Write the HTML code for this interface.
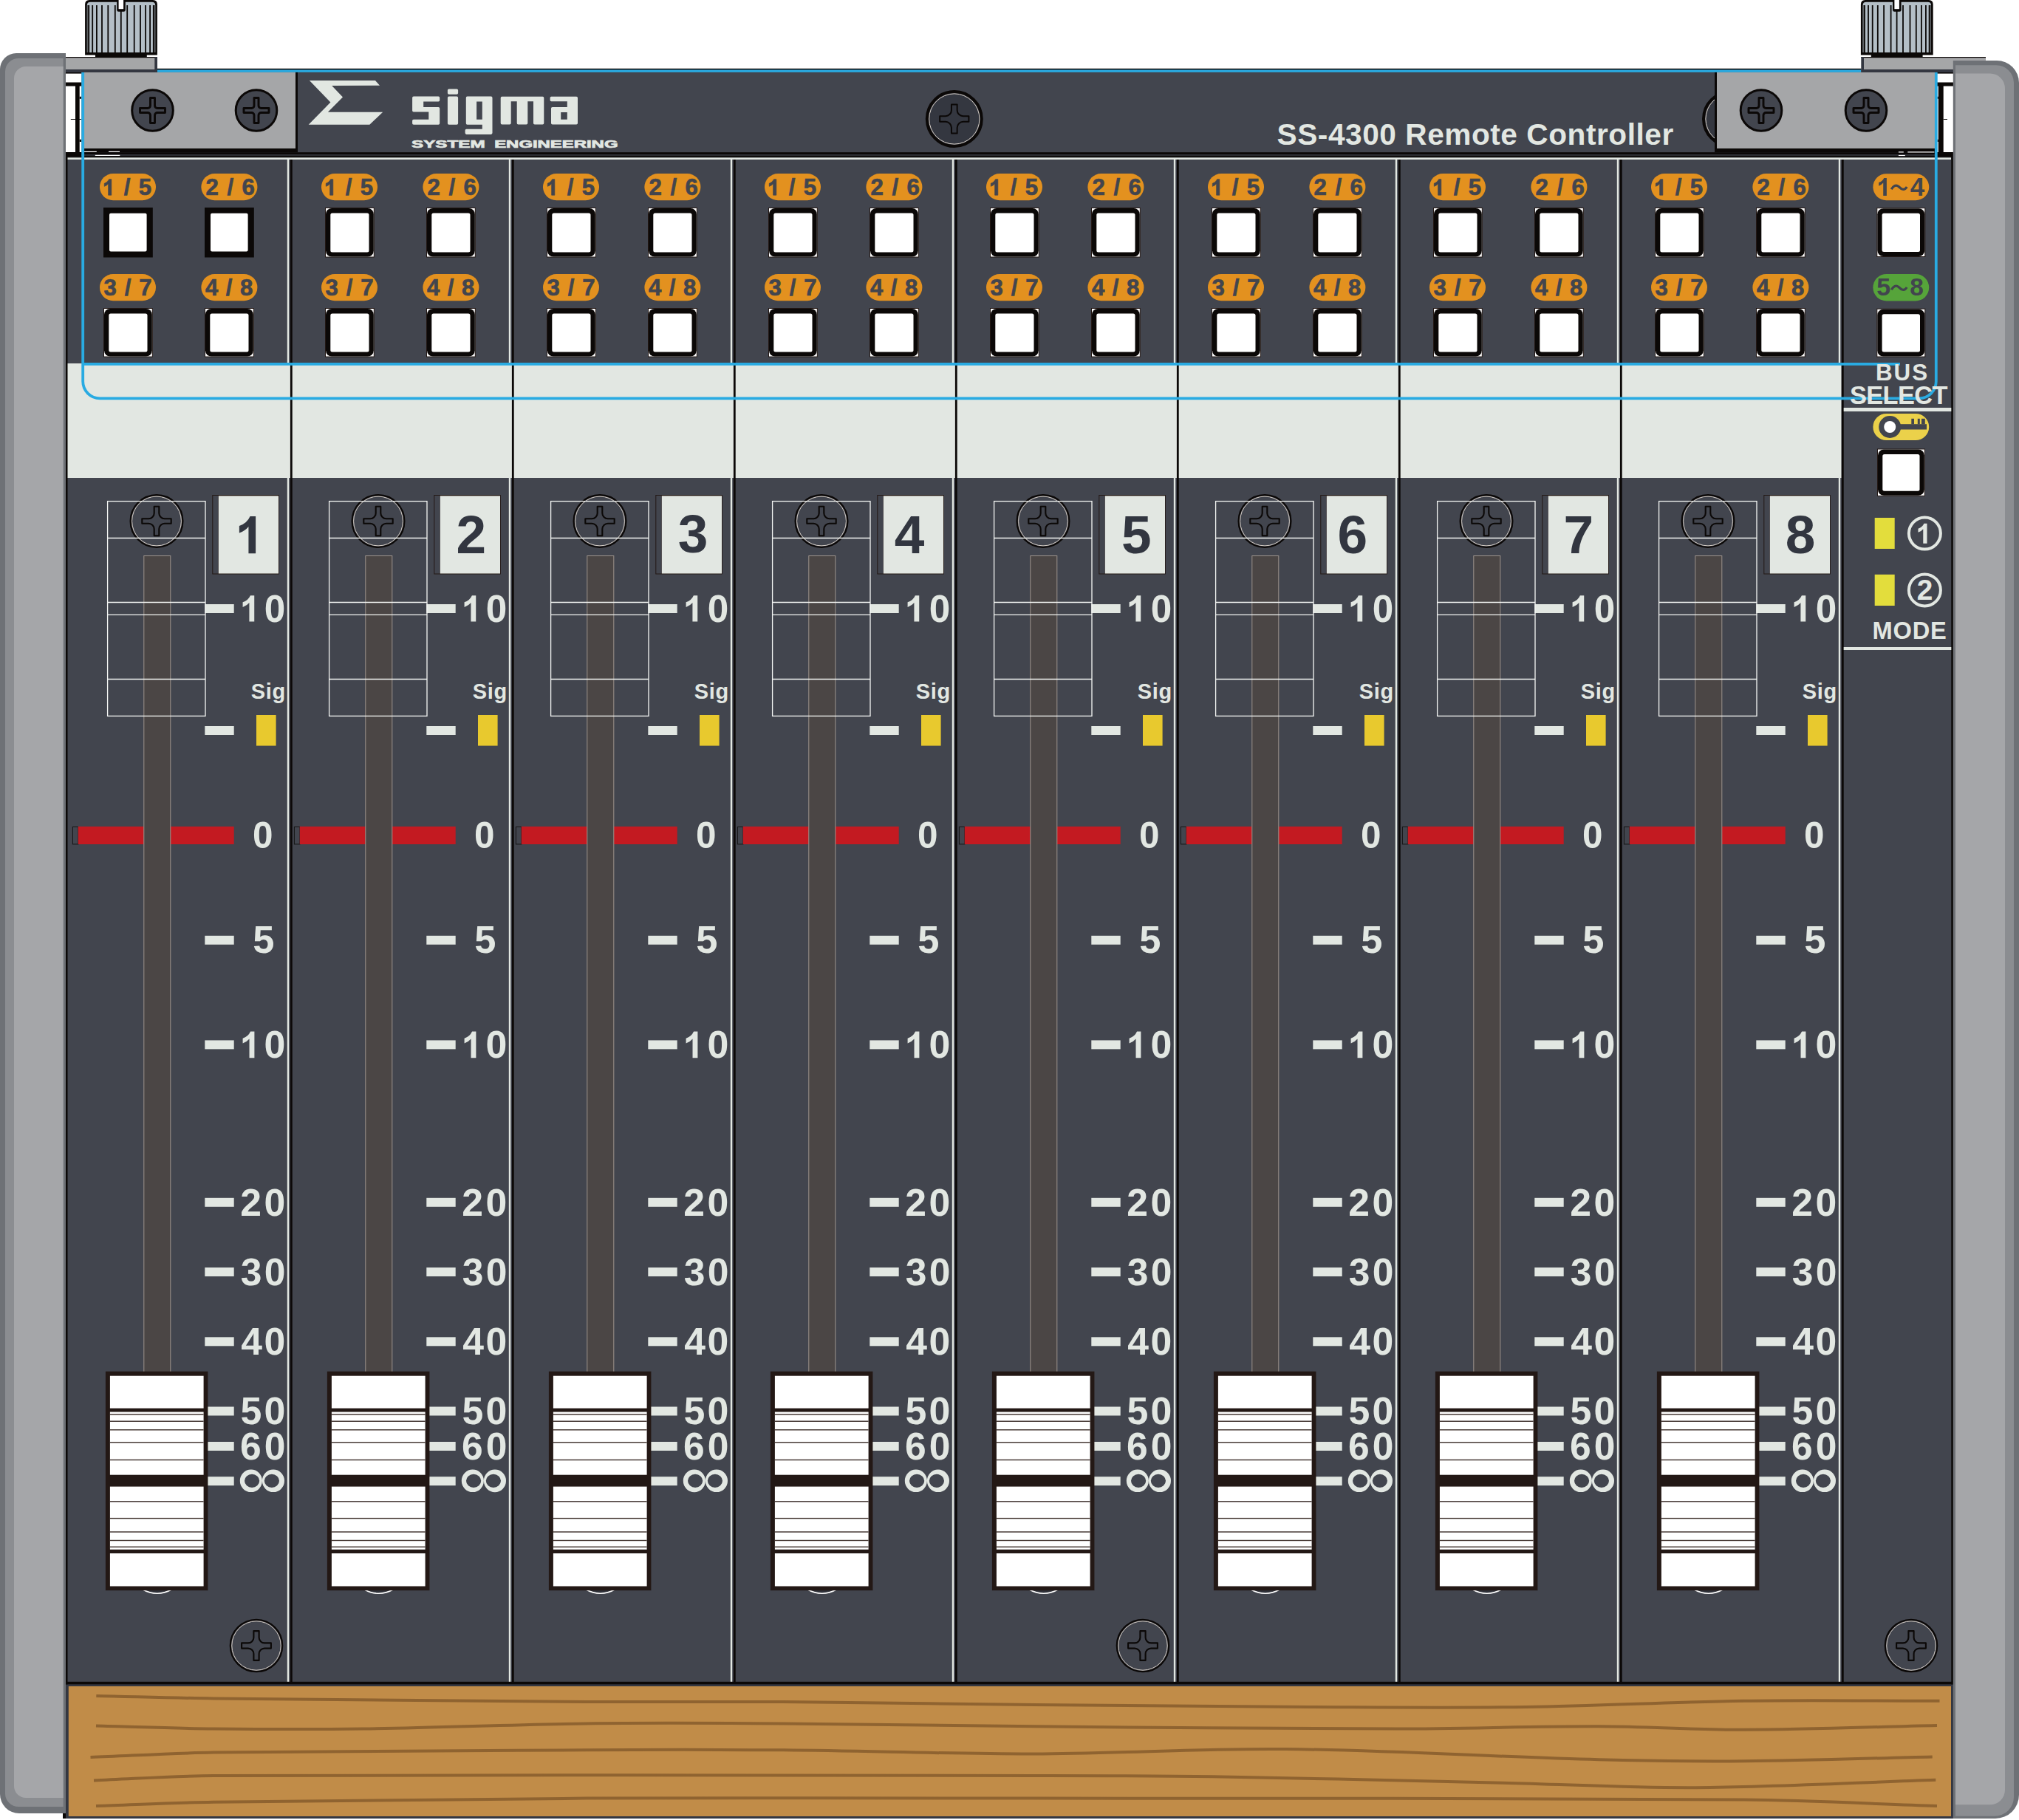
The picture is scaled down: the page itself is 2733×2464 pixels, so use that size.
<!DOCTYPE html>
<html><head><meta charset="utf-8"><title>SS-4300 Remote Controller</title>
<style>html,body{margin:0;padding:0;background:#fff;}body{width:2733px;height:2464px;overflow:hidden;}svg{display:block;font-family:"Liberation Sans",sans-serif;}</style>
</head><body>
<svg width="2733" height="2464" viewBox="0 0 2733 2464" font-family="Liberation Sans, sans-serif">
<rect x="0.00" y="0.00" width="2733.00" height="2464.00" fill="#ffffff"/>
<rect x="89.00" y="93.00" width="2555.00" height="2188.00" fill="#42454e"/>
<rect x="89.00" y="92.80" width="2555.00" height="1.80" fill="#0b0807"/>
<rect x="89.00" y="97.60" width="21.50" height="114.90" fill="#ffffff"/>
<rect x="89.00" y="97.70" width="21.50" height="1.90" fill="#0b0807"/>
<rect x="89.00" y="111.50" width="21.50" height="5.10" fill="#0b0807"/>
<rect x="89.00" y="206.00" width="21.50" height="6.50" fill="#0b0807"/>
<rect x="102.00" y="116.00" width="5.70" height="90.00" fill="#0b0807"/>
<rect x="107.70" y="130.80" width="2.30" height="3.00" fill="#0b0807"/>
<rect x="107.70" y="188.80" width="2.30" height="3.20" fill="#0b0807"/>
<rect x="95.80" y="161.00" width="14.20" height="1.00" fill="#0b0807"/>
<rect x="2622.00" y="97.60" width="22.00" height="114.90" fill="#ffffff"/>
<rect x="2622.00" y="97.70" width="22.00" height="1.90" fill="#0b0807"/>
<rect x="2622.00" y="111.50" width="22.00" height="5.10" fill="#0b0807"/>
<rect x="2622.00" y="206.00" width="22.00" height="6.50" fill="#0b0807"/>
<rect x="2623.80" y="116.00" width="6.90" height="90.00" fill="#0b0807"/>
<rect x="2622.50" y="130.80" width="1.30" height="3.00" fill="#0b0807"/>
<rect x="2622.50" y="188.80" width="1.30" height="3.20" fill="#0b0807"/>
<rect x="2630.70" y="161.00" width="5.30" height="1.00" fill="#0b0807"/>
<rect x="89.00" y="206.20" width="2555.00" height="3.10" fill="#0b0807"/>
<rect x="89.00" y="210.60" width="2555.00" height="2.20" fill="#0b0807"/>
<rect x="89.00" y="212.80" width="2555.00" height="0.60" fill="#1c1c1c"/>
<rect x="91.00" y="213.40" width="2550.00" height="2.60" fill="#e2e7e2"/>
<rect x="91.00" y="492.00" width="2401.50" height="155.00" fill="#e2e7e2"/>
<rect x="88.80" y="212.00" width="2.70" height="2069.00" fill="#0b0807"/>
<rect x="2641.30" y="212.00" width="2.90" height="2069.00" fill="#0b0807"/>
<rect x="388.80" y="216.00" width="2.40" height="276.00" fill="#e2e7e2"/>
<rect x="388.80" y="647.00" width="2.40" height="1630.00" fill="#e2e7e2"/>
<rect x="392.90" y="216.00" width="2.80" height="2061.00" fill="#0b0807"/>
<rect x="135.00" y="235.00" width="76.00" height="36.20" rx="18.10" fill="#e3911f"/>
<rect x="272.40" y="235.00" width="76.00" height="36.20" rx="18.10" fill="#e3911f"/>
<rect x="135.00" y="371.00" width="76.00" height="36.20" rx="18.10" fill="#e3911f"/>
<rect x="272.40" y="371.00" width="76.00" height="36.20" rx="18.10" fill="#e3911f"/>
<text x="167.64 187.74" y="264.18" font-size="31.16" fill="#42454e" font-weight="bold" stroke="#42454e" stroke-width="0.7">/5</text><path d="M147.56,242.74 L150.80,242.74 L150.80,264.18 L146.66,264.18 L146.66,248.70 Q144.73,251.10 141.30,252.32 L141.30,248.27 Q145.80,246.81 147.56,242.74 Z" fill="#42454e" stroke="#42454e" stroke-width="0.7"/>
<text x="278.52 307.39 327.60" y="264.18" font-size="31.16" fill="#42454e" font-weight="bold" stroke="#42454e" stroke-width="0.7">2/6</text>
<text x="140.58 168.75 188.24" y="400.18" font-size="31.16" fill="#42454e" font-weight="bold" stroke="#42454e" stroke-width="0.7">3/7</text>
<text x="277.93 305.82 325.03" y="400.18" font-size="31.16" fill="#42454e" font-weight="bold" stroke="#42454e" stroke-width="0.7">4/8</text>
<rect x="140.00" y="281.00" width="66.80" height="67.50" fill="#0b0807"/>
<rect x="148.00" y="288.80" width="50.60" height="51.70" rx="2" fill="#ffffff"/>
<rect x="277.00" y="281.00" width="66.80" height="67.50" fill="#0b0807"/>
<rect x="285.00" y="288.80" width="50.60" height="51.70" rx="2" fill="#ffffff"/>
<rect x="140.50" y="417.50" width="65.80" height="65.50" fill="#ffffff" stroke="#231815" stroke-width="1"/>
<rect x="141.00" y="418.00" width="64.80" height="64.50" rx="8" fill="#0b0807"/>
<rect x="147.30" y="424.60" width="52.20" height="51.90" rx="2.5" fill="#ffffff"/>
<rect x="277.50" y="417.50" width="65.80" height="65.50" fill="#ffffff" stroke="#231815" stroke-width="1"/>
<rect x="278.00" y="418.00" width="64.80" height="64.50" rx="8" fill="#0b0807"/>
<rect x="284.30" y="424.60" width="52.20" height="51.90" rx="2.5" fill="#ffffff"/>
<circle cx="212.00" cy="705.50" r="35.40" fill="#42454e" stroke="#0b0807" stroke-width="2.20"/>
<circle cx="212.00" cy="705.50" r="33.40" fill="none" stroke="#d8d0c8" stroke-width="1"/>
<path d="M208.70,685.80 L215.30,685.80 L215.30,694.70 C215.30,698.83 218.68,702.20 222.80,702.20 L231.70,702.20 L231.70,708.80 L222.80,708.80 C218.68,708.80 215.30,712.17 215.30,716.30 L215.30,725.20 L208.70,725.20 L208.70,716.30 C208.70,712.17 205.32,708.80 201.20,708.80 L192.30,708.80 L192.30,702.20 L201.20,702.20 C205.32,702.20 208.70,698.83 208.70,694.70 Z" fill="#42454e" stroke="#0b0807" stroke-width="2.10" stroke-linejoin="round"/>
<rect x="287.30" y="670.00" width="90.50" height="107.50" fill="#231815"/>
<rect x="288.30" y="671.00" width="7.20" height="105.50" fill="#42454e"/>
<rect x="295.80" y="671.30" width="81.20" height="105.20" fill="#e2e7e2"/>
<path d="M338.54,699.08 L346.12,699.08 L346.12,749.30 L336.43,749.30 L336.43,713.04 Q331.91,718.66 323.88,721.53 L323.88,712.03 Q334.42,708.62 338.54,699.08 Z" fill="#323640"/>
<rect x="277.30" y="818.00" width="39.40" height="12.00" fill="#e2e7e2"/>
<rect x="277.30" y="983.00" width="39.40" height="12.00" fill="#e2e7e2"/>
<rect x="277.30" y="1266.80" width="39.40" height="12.00" fill="#e2e7e2"/>
<rect x="277.30" y="1408.40" width="39.40" height="12.00" fill="#e2e7e2"/>
<rect x="277.30" y="1621.80" width="39.40" height="12.00" fill="#e2e7e2"/>
<rect x="277.30" y="1716.00" width="39.40" height="12.00" fill="#e2e7e2"/>
<rect x="277.30" y="1810.30" width="39.40" height="12.00" fill="#e2e7e2"/>
<rect x="277.30" y="1904.50" width="39.40" height="12.00" fill="#e2e7e2"/>
<rect x="277.30" y="1952.00" width="39.40" height="12.00" fill="#e2e7e2"/>
<rect x="277.30" y="1999.20" width="39.40" height="12.00" fill="#e2e7e2"/>
<text x="357.79" y="841.50" font-size="51.27" fill="#e2e7e2" font-weight="bold">0</text><path d="M338.90,806.23 L344.23,806.23 L344.23,841.50 L337.42,841.50 L337.42,816.03 Q334.24,819.98 328.60,821.99 L328.60,815.33 Q336.01,812.93 338.90,806.23 Z" fill="#e2e7e2"/>
<text x="339.86 359.79 368.43" y="945.85" font-size="29.00" fill="#e2e7e2" font-weight="bold">Sig</text>
<text x="341.94" y="1147.52" font-size="49.43" fill="#e2e7e2" font-weight="bold">0</text>
<text x="342.19" y="1289.89" font-size="52.45" fill="#e2e7e2" font-weight="bold">5</text>
<text x="357.50" y="1432.19" font-size="51.84" fill="#e2e7e2" font-weight="bold">0</text><path d="M339.01,1396.53 L344.40,1396.53 L344.40,1432.19 L337.52,1432.19 L337.52,1406.45 Q334.31,1410.44 328.60,1412.47 L328.60,1405.73 Q336.09,1403.31 339.01,1396.53 Z" fill="#e2e7e2"/>
<text x="325.21 357.57" y="1645.70" font-size="51.69" fill="#e2e7e2" font-weight="bold">20</text>
<text x="325.82 357.63" y="1739.82" font-size="51.59" fill="#e2e7e2" font-weight="bold">30</text>
<text x="326.22 357.57" y="1834.10" font-size="51.69" fill="#e2e7e2" font-weight="bold">40</text>
<text x="325.41 357.50" y="1927.99" font-size="51.84" fill="#e2e7e2" font-weight="bold">50</text>
<text x="325.11 357.64" y="1976.00" font-size="51.55" fill="#e2e7e2" font-weight="bold">60</text>
<path d="M324.80,2004.85 a15.05,15.25 0 1 0 30.10,0 a15.05,15.25 0 1 0 -30.10,0 Z M354.90,2004.85 a15.05,15.25 0 1 0 30.10,0 a15.05,15.25 0 1 0 -30.10,0 Z M331.00,2004.85 a10.10,9.05 0 1 0 20.20,0 a10.10,9.05 0 1 0 -20.20,0 Z M357.80,2004.85 a10.10,9.05 0 1 0 20.20,0 a10.10,9.05 0 1 0 -20.20,0 Z" fill="#e2e7e2" fill-rule="evenodd"/>
<rect x="347.00" y="968.00" width="26.60" height="41.60" fill="#e8c92e"/>
<rect x="98.40" y="1119.5" width="7.6" height="23.4" fill="#42454e" stroke="#151515" stroke-width="1"/>
<rect x="105.80" y="1119.00" width="210.90" height="24.00" fill="#c31a21"/>
<rect x="194.80" y="752.5" width="36" height="1106" fill="#4b4645" stroke="#9d938c" stroke-width="1"/>
<g fill="none" stroke="#f4f6f4" stroke-width="1.3">
<rect x="145.60" y="678.6" width="132.4" height="290.8"/>
<line x1="145.60" y1="728.50" x2="278.00" y2="728.50"/>
<line x1="145.60" y1="815.50" x2="278.00" y2="815.50"/>
<line x1="145.60" y1="832.30" x2="278.00" y2="832.30"/>
<line x1="145.60" y1="919.50" x2="278.00" y2="919.50"/>
</g>
<path d="M193.50,2152 A38,38 0 0 0 232.00,2152 Z" fill="#2f3139" stroke="#ffffff" stroke-width="1.6"/>
<rect x="142.90" y="1856.70" width="138.50" height="296.50" fill="#231815"/>
<rect x="148.90" y="1862.70" width="126.70" height="43.90" fill="#ffffff"/>
<rect x="148.90" y="1911.50" width="126.70" height="85.20" fill="#ffffff"/>
<rect x="148.90" y="2012.60" width="126.70" height="85.20" fill="#ffffff"/>
<rect x="148.90" y="2103.00" width="126.70" height="44.50" fill="#ffffff"/>
<rect x="148.90" y="1914.30" width="126.70" height="1.40" fill="#3b2d28"/>
<rect x="148.90" y="1923.50" width="126.70" height="1.40" fill="#3b2d28"/>
<rect x="148.90" y="1935.10" width="126.70" height="1.40" fill="#3b2d28"/>
<rect x="148.90" y="1952.10" width="126.70" height="1.40" fill="#3b2d28"/>
<rect x="148.90" y="1975.80" width="126.70" height="1.40" fill="#3b2d28"/>
<rect x="148.90" y="2032.10" width="126.70" height="1.40" fill="#3b2d28"/>
<rect x="148.90" y="2054.90" width="126.70" height="1.40" fill="#3b2d28"/>
<rect x="148.90" y="2073.30" width="126.70" height="1.40" fill="#3b2d28"/>
<rect x="148.90" y="2084.80" width="126.70" height="1.40" fill="#3b2d28"/>
<rect x="148.90" y="2093.60" width="126.70" height="1.40" fill="#3b2d28"/>
<circle cx="347.00" cy="2228.00" r="35.20" fill="#42454e" stroke="#0b0807" stroke-width="2.20"/>
<circle cx="347.00" cy="2228.00" r="33.20" fill="none" stroke="#d8d0c8" stroke-width="1"/>
<path d="M343.40,2208.10 L350.60,2208.10 L350.60,2216.90 C350.60,2221.03 353.98,2224.40 358.10,2224.40 L366.90,2224.40 L366.90,2231.60 L358.10,2231.60 C353.98,2231.60 350.60,2234.97 350.60,2239.10 L350.60,2247.90 L343.40,2247.90 L343.40,2239.10 C343.40,2234.97 340.02,2231.60 335.90,2231.60 L327.10,2231.60 L327.10,2224.40 L335.90,2224.40 C340.02,2224.40 343.40,2221.03 343.40,2216.90 Z" fill="#42454e" stroke="#0b0807" stroke-width="2.10" stroke-linejoin="round"/>
<rect x="688.80" y="216.00" width="2.40" height="276.00" fill="#e2e7e2"/>
<rect x="688.80" y="647.00" width="2.40" height="1630.00" fill="#e2e7e2"/>
<rect x="692.90" y="216.00" width="2.80" height="2061.00" fill="#0b0807"/>
<rect x="435.00" y="235.00" width="76.00" height="36.20" rx="18.10" fill="#e3911f"/>
<rect x="572.40" y="235.00" width="76.00" height="36.20" rx="18.10" fill="#e3911f"/>
<rect x="435.00" y="371.00" width="76.00" height="36.20" rx="18.10" fill="#e3911f"/>
<rect x="572.40" y="371.00" width="76.00" height="36.20" rx="18.10" fill="#e3911f"/>
<text x="467.64 487.74" y="264.18" font-size="31.16" fill="#42454e" font-weight="bold" stroke="#42454e" stroke-width="0.7">/5</text><path d="M447.56,242.74 L450.80,242.74 L450.80,264.18 L446.66,264.18 L446.66,248.70 Q444.73,251.10 441.30,252.32 L441.30,248.27 Q445.80,246.81 447.56,242.74 Z" fill="#42454e" stroke="#42454e" stroke-width="0.7"/>
<text x="578.52 607.39 627.60" y="264.18" font-size="31.16" fill="#42454e" font-weight="bold" stroke="#42454e" stroke-width="0.7">2/6</text>
<text x="440.58 468.75 488.24" y="400.18" font-size="31.16" fill="#42454e" font-weight="bold" stroke="#42454e" stroke-width="0.7">3/7</text>
<text x="577.93 605.82 625.03" y="400.18" font-size="31.16" fill="#42454e" font-weight="bold" stroke="#42454e" stroke-width="0.7">4/8</text>
<rect x="440.50" y="281.50" width="65.80" height="66.50" fill="#ffffff" stroke="#231815" stroke-width="1"/>
<rect x="441.00" y="282.00" width="64.80" height="65.50" rx="8" fill="#0b0807"/>
<rect x="447.30" y="288.60" width="52.20" height="52.90" rx="2.5" fill="#ffffff"/>
<rect x="577.50" y="281.50" width="65.80" height="66.50" fill="#ffffff" stroke="#231815" stroke-width="1"/>
<rect x="578.00" y="282.00" width="64.80" height="65.50" rx="8" fill="#0b0807"/>
<rect x="584.30" y="288.60" width="52.20" height="52.90" rx="2.5" fill="#ffffff"/>
<rect x="440.50" y="417.50" width="65.80" height="65.50" fill="#ffffff" stroke="#231815" stroke-width="1"/>
<rect x="441.00" y="418.00" width="64.80" height="64.50" rx="8" fill="#0b0807"/>
<rect x="447.30" y="424.60" width="52.20" height="51.90" rx="2.5" fill="#ffffff"/>
<rect x="577.50" y="417.50" width="65.80" height="65.50" fill="#ffffff" stroke="#231815" stroke-width="1"/>
<rect x="578.00" y="418.00" width="64.80" height="64.50" rx="8" fill="#0b0807"/>
<rect x="584.30" y="424.60" width="52.20" height="51.90" rx="2.5" fill="#ffffff"/>
<circle cx="512.00" cy="705.50" r="35.40" fill="#42454e" stroke="#0b0807" stroke-width="2.20"/>
<circle cx="512.00" cy="705.50" r="33.40" fill="none" stroke="#d8d0c8" stroke-width="1"/>
<path d="M508.70,685.80 L515.30,685.80 L515.30,694.70 C515.30,698.83 518.67,702.20 522.80,702.20 L531.70,702.20 L531.70,708.80 L522.80,708.80 C518.67,708.80 515.30,712.17 515.30,716.30 L515.30,725.20 L508.70,725.20 L508.70,716.30 C508.70,712.17 505.32,708.80 501.20,708.80 L492.30,708.80 L492.30,702.20 L501.20,702.20 C505.32,702.20 508.70,698.83 508.70,694.70 Z" fill="#42454e" stroke="#0b0807" stroke-width="2.10" stroke-linejoin="round"/>
<rect x="587.30" y="670.00" width="90.50" height="107.50" fill="#231815"/>
<rect x="588.30" y="671.00" width="7.20" height="105.50" fill="#42454e"/>
<rect x="595.80" y="671.30" width="81.20" height="105.20" fill="#e2e7e2"/>
<text x="617.40" y="749.30" font-size="73.00" fill="#323640" font-weight="bold">2</text>
<rect x="577.30" y="818.00" width="39.40" height="12.00" fill="#e2e7e2"/>
<rect x="577.30" y="983.00" width="39.40" height="12.00" fill="#e2e7e2"/>
<rect x="577.30" y="1266.80" width="39.40" height="12.00" fill="#e2e7e2"/>
<rect x="577.30" y="1408.40" width="39.40" height="12.00" fill="#e2e7e2"/>
<rect x="577.30" y="1621.80" width="39.40" height="12.00" fill="#e2e7e2"/>
<rect x="577.30" y="1716.00" width="39.40" height="12.00" fill="#e2e7e2"/>
<rect x="577.30" y="1810.30" width="39.40" height="12.00" fill="#e2e7e2"/>
<rect x="577.30" y="1904.50" width="39.40" height="12.00" fill="#e2e7e2"/>
<rect x="577.30" y="1952.00" width="39.40" height="12.00" fill="#e2e7e2"/>
<rect x="577.30" y="1999.20" width="39.40" height="12.00" fill="#e2e7e2"/>
<text x="657.79" y="841.50" font-size="51.27" fill="#e2e7e2" font-weight="bold">0</text><path d="M638.90,806.23 L644.23,806.23 L644.23,841.50 L637.42,841.50 L637.42,816.03 Q634.24,819.98 628.60,821.99 L628.60,815.33 Q636.01,812.93 638.90,806.23 Z" fill="#e2e7e2"/>
<text x="639.86 659.79 668.43" y="945.85" font-size="29.00" fill="#e2e7e2" font-weight="bold">Sig</text>
<text x="641.94" y="1147.52" font-size="49.43" fill="#e2e7e2" font-weight="bold">0</text>
<text x="642.19" y="1289.89" font-size="52.45" fill="#e2e7e2" font-weight="bold">5</text>
<text x="657.50" y="1432.19" font-size="51.84" fill="#e2e7e2" font-weight="bold">0</text><path d="M639.01,1396.53 L644.40,1396.53 L644.40,1432.19 L637.52,1432.19 L637.52,1406.45 Q634.31,1410.44 628.60,1412.47 L628.60,1405.73 Q636.09,1403.31 639.01,1396.53 Z" fill="#e2e7e2"/>
<text x="625.21 657.57" y="1645.70" font-size="51.69" fill="#e2e7e2" font-weight="bold">20</text>
<text x="625.82 657.63" y="1739.82" font-size="51.59" fill="#e2e7e2" font-weight="bold">30</text>
<text x="626.22 657.57" y="1834.10" font-size="51.69" fill="#e2e7e2" font-weight="bold">40</text>
<text x="625.41 657.50" y="1927.99" font-size="51.84" fill="#e2e7e2" font-weight="bold">50</text>
<text x="625.11 657.64" y="1976.00" font-size="51.55" fill="#e2e7e2" font-weight="bold">60</text>
<path d="M624.80,2004.85 a15.05,15.25 0 1 0 30.10,0 a15.05,15.25 0 1 0 -30.10,0 Z M654.90,2004.85 a15.05,15.25 0 1 0 30.10,0 a15.05,15.25 0 1 0 -30.10,0 Z M631.00,2004.85 a10.10,9.05 0 1 0 20.20,0 a10.10,9.05 0 1 0 -20.20,0 Z M657.80,2004.85 a10.10,9.05 0 1 0 20.20,0 a10.10,9.05 0 1 0 -20.20,0 Z" fill="#e2e7e2" fill-rule="evenodd"/>
<rect x="647.00" y="968.00" width="26.60" height="41.60" fill="#e8c92e"/>
<rect x="398.40" y="1119.5" width="7.6" height="23.4" fill="#42454e" stroke="#151515" stroke-width="1"/>
<rect x="405.80" y="1119.00" width="210.90" height="24.00" fill="#c31a21"/>
<rect x="494.80" y="752.5" width="36" height="1106" fill="#4b4645" stroke="#9d938c" stroke-width="1"/>
<g fill="none" stroke="#f4f6f4" stroke-width="1.3">
<rect x="445.60" y="678.6" width="132.4" height="290.8"/>
<line x1="445.60" y1="728.50" x2="578.00" y2="728.50"/>
<line x1="445.60" y1="815.50" x2="578.00" y2="815.50"/>
<line x1="445.60" y1="832.30" x2="578.00" y2="832.30"/>
<line x1="445.60" y1="919.50" x2="578.00" y2="919.50"/>
</g>
<path d="M493.50,2152 A38,38 0 0 0 532.00,2152 Z" fill="#2f3139" stroke="#ffffff" stroke-width="1.6"/>
<rect x="442.90" y="1856.70" width="138.50" height="296.50" fill="#231815"/>
<rect x="448.90" y="1862.70" width="126.70" height="43.90" fill="#ffffff"/>
<rect x="448.90" y="1911.50" width="126.70" height="85.20" fill="#ffffff"/>
<rect x="448.90" y="2012.60" width="126.70" height="85.20" fill="#ffffff"/>
<rect x="448.90" y="2103.00" width="126.70" height="44.50" fill="#ffffff"/>
<rect x="448.90" y="1914.30" width="126.70" height="1.40" fill="#3b2d28"/>
<rect x="448.90" y="1923.50" width="126.70" height="1.40" fill="#3b2d28"/>
<rect x="448.90" y="1935.10" width="126.70" height="1.40" fill="#3b2d28"/>
<rect x="448.90" y="1952.10" width="126.70" height="1.40" fill="#3b2d28"/>
<rect x="448.90" y="1975.80" width="126.70" height="1.40" fill="#3b2d28"/>
<rect x="448.90" y="2032.10" width="126.70" height="1.40" fill="#3b2d28"/>
<rect x="448.90" y="2054.90" width="126.70" height="1.40" fill="#3b2d28"/>
<rect x="448.90" y="2073.30" width="126.70" height="1.40" fill="#3b2d28"/>
<rect x="448.90" y="2084.80" width="126.70" height="1.40" fill="#3b2d28"/>
<rect x="448.90" y="2093.60" width="126.70" height="1.40" fill="#3b2d28"/>
<rect x="988.80" y="216.00" width="2.40" height="276.00" fill="#e2e7e2"/>
<rect x="988.80" y="647.00" width="2.40" height="1630.00" fill="#e2e7e2"/>
<rect x="992.90" y="216.00" width="2.80" height="2061.00" fill="#0b0807"/>
<rect x="735.00" y="235.00" width="76.00" height="36.20" rx="18.10" fill="#e3911f"/>
<rect x="872.40" y="235.00" width="76.00" height="36.20" rx="18.10" fill="#e3911f"/>
<rect x="735.00" y="371.00" width="76.00" height="36.20" rx="18.10" fill="#e3911f"/>
<rect x="872.40" y="371.00" width="76.00" height="36.20" rx="18.10" fill="#e3911f"/>
<text x="767.64 787.74" y="264.18" font-size="31.16" fill="#42454e" font-weight="bold" stroke="#42454e" stroke-width="0.7">/5</text><path d="M747.56,242.74 L750.80,242.74 L750.80,264.18 L746.66,264.18 L746.66,248.70 Q744.73,251.10 741.30,252.32 L741.30,248.27 Q745.80,246.81 747.56,242.74 Z" fill="#42454e" stroke="#42454e" stroke-width="0.7"/>
<text x="878.52 907.39 927.60" y="264.18" font-size="31.16" fill="#42454e" font-weight="bold" stroke="#42454e" stroke-width="0.7">2/6</text>
<text x="740.58 768.75 788.24" y="400.18" font-size="31.16" fill="#42454e" font-weight="bold" stroke="#42454e" stroke-width="0.7">3/7</text>
<text x="877.93 905.82 925.03" y="400.18" font-size="31.16" fill="#42454e" font-weight="bold" stroke="#42454e" stroke-width="0.7">4/8</text>
<rect x="740.50" y="281.50" width="65.80" height="66.50" fill="#ffffff" stroke="#231815" stroke-width="1"/>
<rect x="741.00" y="282.00" width="64.80" height="65.50" rx="8" fill="#0b0807"/>
<rect x="747.30" y="288.60" width="52.20" height="52.90" rx="2.5" fill="#ffffff"/>
<rect x="877.50" y="281.50" width="65.80" height="66.50" fill="#ffffff" stroke="#231815" stroke-width="1"/>
<rect x="878.00" y="282.00" width="64.80" height="65.50" rx="8" fill="#0b0807"/>
<rect x="884.30" y="288.60" width="52.20" height="52.90" rx="2.5" fill="#ffffff"/>
<rect x="740.50" y="417.50" width="65.80" height="65.50" fill="#ffffff" stroke="#231815" stroke-width="1"/>
<rect x="741.00" y="418.00" width="64.80" height="64.50" rx="8" fill="#0b0807"/>
<rect x="747.30" y="424.60" width="52.20" height="51.90" rx="2.5" fill="#ffffff"/>
<rect x="877.50" y="417.50" width="65.80" height="65.50" fill="#ffffff" stroke="#231815" stroke-width="1"/>
<rect x="878.00" y="418.00" width="64.80" height="64.50" rx="8" fill="#0b0807"/>
<rect x="884.30" y="424.60" width="52.20" height="51.90" rx="2.5" fill="#ffffff"/>
<circle cx="812.00" cy="705.50" r="35.40" fill="#42454e" stroke="#0b0807" stroke-width="2.20"/>
<circle cx="812.00" cy="705.50" r="33.40" fill="none" stroke="#d8d0c8" stroke-width="1"/>
<path d="M808.70,685.80 L815.30,685.80 L815.30,694.70 C815.30,698.83 818.67,702.20 822.80,702.20 L831.70,702.20 L831.70,708.80 L822.80,708.80 C818.67,708.80 815.30,712.17 815.30,716.30 L815.30,725.20 L808.70,725.20 L808.70,716.30 C808.70,712.17 805.33,708.80 801.20,708.80 L792.30,708.80 L792.30,702.20 L801.20,702.20 C805.33,702.20 808.70,698.83 808.70,694.70 Z" fill="#42454e" stroke="#0b0807" stroke-width="2.10" stroke-linejoin="round"/>
<rect x="887.30" y="670.00" width="90.50" height="107.50" fill="#231815"/>
<rect x="888.30" y="671.00" width="7.20" height="105.50" fill="#42454e"/>
<rect x="895.80" y="671.30" width="81.20" height="105.20" fill="#e2e7e2"/>
<text x="917.78" y="748.48" font-size="73.00" fill="#323640" font-weight="bold">3</text>
<rect x="877.30" y="818.00" width="39.40" height="12.00" fill="#e2e7e2"/>
<rect x="877.30" y="983.00" width="39.40" height="12.00" fill="#e2e7e2"/>
<rect x="877.30" y="1266.80" width="39.40" height="12.00" fill="#e2e7e2"/>
<rect x="877.30" y="1408.40" width="39.40" height="12.00" fill="#e2e7e2"/>
<rect x="877.30" y="1621.80" width="39.40" height="12.00" fill="#e2e7e2"/>
<rect x="877.30" y="1716.00" width="39.40" height="12.00" fill="#e2e7e2"/>
<rect x="877.30" y="1810.30" width="39.40" height="12.00" fill="#e2e7e2"/>
<rect x="877.30" y="1904.50" width="39.40" height="12.00" fill="#e2e7e2"/>
<rect x="877.30" y="1952.00" width="39.40" height="12.00" fill="#e2e7e2"/>
<rect x="877.30" y="1999.20" width="39.40" height="12.00" fill="#e2e7e2"/>
<text x="957.79" y="841.50" font-size="51.27" fill="#e2e7e2" font-weight="bold">0</text><path d="M938.90,806.23 L944.23,806.23 L944.23,841.50 L937.42,841.50 L937.42,816.03 Q934.24,819.98 928.60,821.99 L928.60,815.33 Q936.01,812.93 938.90,806.23 Z" fill="#e2e7e2"/>
<text x="939.86 959.79 968.43" y="945.85" font-size="29.00" fill="#e2e7e2" font-weight="bold">Sig</text>
<text x="941.94" y="1147.52" font-size="49.43" fill="#e2e7e2" font-weight="bold">0</text>
<text x="942.19" y="1289.89" font-size="52.45" fill="#e2e7e2" font-weight="bold">5</text>
<text x="957.50" y="1432.19" font-size="51.84" fill="#e2e7e2" font-weight="bold">0</text><path d="M939.01,1396.53 L944.40,1396.53 L944.40,1432.19 L937.52,1432.19 L937.52,1406.45 Q934.31,1410.44 928.60,1412.47 L928.60,1405.73 Q936.09,1403.31 939.01,1396.53 Z" fill="#e2e7e2"/>
<text x="925.21 957.57" y="1645.70" font-size="51.69" fill="#e2e7e2" font-weight="bold">20</text>
<text x="925.82 957.63" y="1739.82" font-size="51.59" fill="#e2e7e2" font-weight="bold">30</text>
<text x="926.22 957.57" y="1834.10" font-size="51.69" fill="#e2e7e2" font-weight="bold">40</text>
<text x="925.41 957.50" y="1927.99" font-size="51.84" fill="#e2e7e2" font-weight="bold">50</text>
<text x="925.11 957.64" y="1976.00" font-size="51.55" fill="#e2e7e2" font-weight="bold">60</text>
<path d="M924.80,2004.85 a15.05,15.25 0 1 0 30.10,0 a15.05,15.25 0 1 0 -30.10,0 Z M954.90,2004.85 a15.05,15.25 0 1 0 30.10,0 a15.05,15.25 0 1 0 -30.10,0 Z M931.00,2004.85 a10.10,9.05 0 1 0 20.20,0 a10.10,9.05 0 1 0 -20.20,0 Z M957.80,2004.85 a10.10,9.05 0 1 0 20.20,0 a10.10,9.05 0 1 0 -20.20,0 Z" fill="#e2e7e2" fill-rule="evenodd"/>
<rect x="947.00" y="968.00" width="26.60" height="41.60" fill="#e8c92e"/>
<rect x="698.40" y="1119.5" width="7.6" height="23.4" fill="#42454e" stroke="#151515" stroke-width="1"/>
<rect x="705.80" y="1119.00" width="210.90" height="24.00" fill="#c31a21"/>
<rect x="794.80" y="752.5" width="36" height="1106" fill="#4b4645" stroke="#9d938c" stroke-width="1"/>
<g fill="none" stroke="#f4f6f4" stroke-width="1.3">
<rect x="745.60" y="678.6" width="132.4" height="290.8"/>
<line x1="745.60" y1="728.50" x2="878.00" y2="728.50"/>
<line x1="745.60" y1="815.50" x2="878.00" y2="815.50"/>
<line x1="745.60" y1="832.30" x2="878.00" y2="832.30"/>
<line x1="745.60" y1="919.50" x2="878.00" y2="919.50"/>
</g>
<path d="M793.50,2152 A38,38 0 0 0 832.00,2152 Z" fill="#2f3139" stroke="#ffffff" stroke-width="1.6"/>
<rect x="742.90" y="1856.70" width="138.50" height="296.50" fill="#231815"/>
<rect x="748.90" y="1862.70" width="126.70" height="43.90" fill="#ffffff"/>
<rect x="748.90" y="1911.50" width="126.70" height="85.20" fill="#ffffff"/>
<rect x="748.90" y="2012.60" width="126.70" height="85.20" fill="#ffffff"/>
<rect x="748.90" y="2103.00" width="126.70" height="44.50" fill="#ffffff"/>
<rect x="748.90" y="1914.30" width="126.70" height="1.40" fill="#3b2d28"/>
<rect x="748.90" y="1923.50" width="126.70" height="1.40" fill="#3b2d28"/>
<rect x="748.90" y="1935.10" width="126.70" height="1.40" fill="#3b2d28"/>
<rect x="748.90" y="1952.10" width="126.70" height="1.40" fill="#3b2d28"/>
<rect x="748.90" y="1975.80" width="126.70" height="1.40" fill="#3b2d28"/>
<rect x="748.90" y="2032.10" width="126.70" height="1.40" fill="#3b2d28"/>
<rect x="748.90" y="2054.90" width="126.70" height="1.40" fill="#3b2d28"/>
<rect x="748.90" y="2073.30" width="126.70" height="1.40" fill="#3b2d28"/>
<rect x="748.90" y="2084.80" width="126.70" height="1.40" fill="#3b2d28"/>
<rect x="748.90" y="2093.60" width="126.70" height="1.40" fill="#3b2d28"/>
<rect x="1288.80" y="216.00" width="2.40" height="276.00" fill="#e2e7e2"/>
<rect x="1288.80" y="647.00" width="2.40" height="1630.00" fill="#e2e7e2"/>
<rect x="1292.90" y="216.00" width="2.80" height="2061.00" fill="#0b0807"/>
<rect x="1035.00" y="235.00" width="76.00" height="36.20" rx="18.10" fill="#e3911f"/>
<rect x="1172.40" y="235.00" width="76.00" height="36.20" rx="18.10" fill="#e3911f"/>
<rect x="1035.00" y="371.00" width="76.00" height="36.20" rx="18.10" fill="#e3911f"/>
<rect x="1172.40" y="371.00" width="76.00" height="36.20" rx="18.10" fill="#e3911f"/>
<text x="1067.64 1087.74" y="264.18" font-size="31.16" fill="#42454e" font-weight="bold" stroke="#42454e" stroke-width="0.7">/5</text><path d="M1047.56,242.74 L1050.80,242.74 L1050.80,264.18 L1046.66,264.18 L1046.66,248.70 Q1044.73,251.10 1041.30,252.32 L1041.30,248.27 Q1045.80,246.81 1047.56,242.74 Z" fill="#42454e" stroke="#42454e" stroke-width="0.7"/>
<text x="1178.52 1207.39 1227.60" y="264.18" font-size="31.16" fill="#42454e" font-weight="bold" stroke="#42454e" stroke-width="0.7">2/6</text>
<text x="1040.58 1068.75 1088.24" y="400.18" font-size="31.16" fill="#42454e" font-weight="bold" stroke="#42454e" stroke-width="0.7">3/7</text>
<text x="1177.93 1205.82 1225.03" y="400.18" font-size="31.16" fill="#42454e" font-weight="bold" stroke="#42454e" stroke-width="0.7">4/8</text>
<rect x="1040.50" y="281.50" width="65.80" height="66.50" fill="#ffffff" stroke="#231815" stroke-width="1"/>
<rect x="1041.00" y="282.00" width="64.80" height="65.50" rx="8" fill="#0b0807"/>
<rect x="1047.30" y="288.60" width="52.20" height="52.90" rx="2.5" fill="#ffffff"/>
<rect x="1177.50" y="281.50" width="65.80" height="66.50" fill="#ffffff" stroke="#231815" stroke-width="1"/>
<rect x="1178.00" y="282.00" width="64.80" height="65.50" rx="8" fill="#0b0807"/>
<rect x="1184.30" y="288.60" width="52.20" height="52.90" rx="2.5" fill="#ffffff"/>
<rect x="1040.50" y="417.50" width="65.80" height="65.50" fill="#ffffff" stroke="#231815" stroke-width="1"/>
<rect x="1041.00" y="418.00" width="64.80" height="64.50" rx="8" fill="#0b0807"/>
<rect x="1047.30" y="424.60" width="52.20" height="51.90" rx="2.5" fill="#ffffff"/>
<rect x="1177.50" y="417.50" width="65.80" height="65.50" fill="#ffffff" stroke="#231815" stroke-width="1"/>
<rect x="1178.00" y="418.00" width="64.80" height="64.50" rx="8" fill="#0b0807"/>
<rect x="1184.30" y="424.60" width="52.20" height="51.90" rx="2.5" fill="#ffffff"/>
<circle cx="1112.00" cy="705.50" r="35.40" fill="#42454e" stroke="#0b0807" stroke-width="2.20"/>
<circle cx="1112.00" cy="705.50" r="33.40" fill="none" stroke="#d8d0c8" stroke-width="1"/>
<path d="M1108.70,685.80 L1115.30,685.80 L1115.30,694.70 C1115.30,698.83 1118.67,702.20 1122.80,702.20 L1131.70,702.20 L1131.70,708.80 L1122.80,708.80 C1118.67,708.80 1115.30,712.17 1115.30,716.30 L1115.30,725.20 L1108.70,725.20 L1108.70,716.30 C1108.70,712.17 1105.33,708.80 1101.20,708.80 L1092.30,708.80 L1092.30,702.20 L1101.20,702.20 C1105.33,702.20 1108.70,698.83 1108.70,694.70 Z" fill="#42454e" stroke="#0b0807" stroke-width="2.10" stroke-linejoin="round"/>
<rect x="1187.30" y="670.00" width="90.50" height="107.50" fill="#231815"/>
<rect x="1188.30" y="671.00" width="7.20" height="105.50" fill="#42454e"/>
<rect x="1195.80" y="671.30" width="81.20" height="105.20" fill="#e2e7e2"/>
<text x="1210.79" y="749.30" font-size="73.00" fill="#323640" font-weight="bold">4</text>
<rect x="1177.30" y="818.00" width="39.40" height="12.00" fill="#e2e7e2"/>
<rect x="1177.30" y="983.00" width="39.40" height="12.00" fill="#e2e7e2"/>
<rect x="1177.30" y="1266.80" width="39.40" height="12.00" fill="#e2e7e2"/>
<rect x="1177.30" y="1408.40" width="39.40" height="12.00" fill="#e2e7e2"/>
<rect x="1177.30" y="1621.80" width="39.40" height="12.00" fill="#e2e7e2"/>
<rect x="1177.30" y="1716.00" width="39.40" height="12.00" fill="#e2e7e2"/>
<rect x="1177.30" y="1810.30" width="39.40" height="12.00" fill="#e2e7e2"/>
<rect x="1177.30" y="1904.50" width="39.40" height="12.00" fill="#e2e7e2"/>
<rect x="1177.30" y="1952.00" width="39.40" height="12.00" fill="#e2e7e2"/>
<rect x="1177.30" y="1999.20" width="39.40" height="12.00" fill="#e2e7e2"/>
<text x="1257.79" y="841.50" font-size="51.27" fill="#e2e7e2" font-weight="bold">0</text><path d="M1238.90,806.23 L1244.23,806.23 L1244.23,841.50 L1237.42,841.50 L1237.42,816.03 Q1234.24,819.98 1228.60,821.99 L1228.60,815.33 Q1236.01,812.93 1238.90,806.23 Z" fill="#e2e7e2"/>
<text x="1239.86 1259.79 1268.43" y="945.85" font-size="29.00" fill="#e2e7e2" font-weight="bold">Sig</text>
<text x="1241.94" y="1147.52" font-size="49.43" fill="#e2e7e2" font-weight="bold">0</text>
<text x="1242.19" y="1289.89" font-size="52.45" fill="#e2e7e2" font-weight="bold">5</text>
<text x="1257.50" y="1432.19" font-size="51.84" fill="#e2e7e2" font-weight="bold">0</text><path d="M1239.01,1396.53 L1244.40,1396.53 L1244.40,1432.19 L1237.52,1432.19 L1237.52,1406.45 Q1234.31,1410.44 1228.60,1412.47 L1228.60,1405.73 Q1236.09,1403.31 1239.01,1396.53 Z" fill="#e2e7e2"/>
<text x="1225.21 1257.57" y="1645.70" font-size="51.69" fill="#e2e7e2" font-weight="bold">20</text>
<text x="1225.82 1257.63" y="1739.82" font-size="51.59" fill="#e2e7e2" font-weight="bold">30</text>
<text x="1226.22 1257.57" y="1834.10" font-size="51.69" fill="#e2e7e2" font-weight="bold">40</text>
<text x="1225.41 1257.50" y="1927.99" font-size="51.84" fill="#e2e7e2" font-weight="bold">50</text>
<text x="1225.11 1257.64" y="1976.00" font-size="51.55" fill="#e2e7e2" font-weight="bold">60</text>
<path d="M1224.80,2004.85 a15.05,15.25 0 1 0 30.10,0 a15.05,15.25 0 1 0 -30.10,0 Z M1254.90,2004.85 a15.05,15.25 0 1 0 30.10,0 a15.05,15.25 0 1 0 -30.10,0 Z M1231.00,2004.85 a10.10,9.05 0 1 0 20.20,0 a10.10,9.05 0 1 0 -20.20,0 Z M1257.80,2004.85 a10.10,9.05 0 1 0 20.20,0 a10.10,9.05 0 1 0 -20.20,0 Z" fill="#e2e7e2" fill-rule="evenodd"/>
<rect x="1247.00" y="968.00" width="26.60" height="41.60" fill="#e8c92e"/>
<rect x="998.40" y="1119.5" width="7.6" height="23.4" fill="#42454e" stroke="#151515" stroke-width="1"/>
<rect x="1005.80" y="1119.00" width="210.90" height="24.00" fill="#c31a21"/>
<rect x="1094.80" y="752.5" width="36" height="1106" fill="#4b4645" stroke="#9d938c" stroke-width="1"/>
<g fill="none" stroke="#f4f6f4" stroke-width="1.3">
<rect x="1045.60" y="678.6" width="132.4" height="290.8"/>
<line x1="1045.60" y1="728.50" x2="1178.00" y2="728.50"/>
<line x1="1045.60" y1="815.50" x2="1178.00" y2="815.50"/>
<line x1="1045.60" y1="832.30" x2="1178.00" y2="832.30"/>
<line x1="1045.60" y1="919.50" x2="1178.00" y2="919.50"/>
</g>
<path d="M1093.50,2152 A38,38 0 0 0 1132.00,2152 Z" fill="#2f3139" stroke="#ffffff" stroke-width="1.6"/>
<rect x="1042.90" y="1856.70" width="138.50" height="296.50" fill="#231815"/>
<rect x="1048.90" y="1862.70" width="126.70" height="43.90" fill="#ffffff"/>
<rect x="1048.90" y="1911.50" width="126.70" height="85.20" fill="#ffffff"/>
<rect x="1048.90" y="2012.60" width="126.70" height="85.20" fill="#ffffff"/>
<rect x="1048.90" y="2103.00" width="126.70" height="44.50" fill="#ffffff"/>
<rect x="1048.90" y="1914.30" width="126.70" height="1.40" fill="#3b2d28"/>
<rect x="1048.90" y="1923.50" width="126.70" height="1.40" fill="#3b2d28"/>
<rect x="1048.90" y="1935.10" width="126.70" height="1.40" fill="#3b2d28"/>
<rect x="1048.90" y="1952.10" width="126.70" height="1.40" fill="#3b2d28"/>
<rect x="1048.90" y="1975.80" width="126.70" height="1.40" fill="#3b2d28"/>
<rect x="1048.90" y="2032.10" width="126.70" height="1.40" fill="#3b2d28"/>
<rect x="1048.90" y="2054.90" width="126.70" height="1.40" fill="#3b2d28"/>
<rect x="1048.90" y="2073.30" width="126.70" height="1.40" fill="#3b2d28"/>
<rect x="1048.90" y="2084.80" width="126.70" height="1.40" fill="#3b2d28"/>
<rect x="1048.90" y="2093.60" width="126.70" height="1.40" fill="#3b2d28"/>
<rect x="1588.80" y="216.00" width="2.40" height="276.00" fill="#e2e7e2"/>
<rect x="1588.80" y="647.00" width="2.40" height="1630.00" fill="#e2e7e2"/>
<rect x="1592.90" y="216.00" width="2.80" height="2061.00" fill="#0b0807"/>
<rect x="1335.00" y="235.00" width="76.00" height="36.20" rx="18.10" fill="#e3911f"/>
<rect x="1472.40" y="235.00" width="76.00" height="36.20" rx="18.10" fill="#e3911f"/>
<rect x="1335.00" y="371.00" width="76.00" height="36.20" rx="18.10" fill="#e3911f"/>
<rect x="1472.40" y="371.00" width="76.00" height="36.20" rx="18.10" fill="#e3911f"/>
<text x="1367.64 1387.74" y="264.18" font-size="31.16" fill="#42454e" font-weight="bold" stroke="#42454e" stroke-width="0.7">/5</text><path d="M1347.56,242.74 L1350.80,242.74 L1350.80,264.18 L1346.66,264.18 L1346.66,248.70 Q1344.73,251.10 1341.30,252.32 L1341.30,248.27 Q1345.80,246.81 1347.56,242.74 Z" fill="#42454e" stroke="#42454e" stroke-width="0.7"/>
<text x="1478.52 1507.39 1527.60" y="264.18" font-size="31.16" fill="#42454e" font-weight="bold" stroke="#42454e" stroke-width="0.7">2/6</text>
<text x="1340.58 1368.75 1388.24" y="400.18" font-size="31.16" fill="#42454e" font-weight="bold" stroke="#42454e" stroke-width="0.7">3/7</text>
<text x="1477.93 1505.82 1525.03" y="400.18" font-size="31.16" fill="#42454e" font-weight="bold" stroke="#42454e" stroke-width="0.7">4/8</text>
<rect x="1340.50" y="281.50" width="65.80" height="66.50" fill="#ffffff" stroke="#231815" stroke-width="1"/>
<rect x="1341.00" y="282.00" width="64.80" height="65.50" rx="8" fill="#0b0807"/>
<rect x="1347.30" y="288.60" width="52.20" height="52.90" rx="2.5" fill="#ffffff"/>
<rect x="1477.50" y="281.50" width="65.80" height="66.50" fill="#ffffff" stroke="#231815" stroke-width="1"/>
<rect x="1478.00" y="282.00" width="64.80" height="65.50" rx="8" fill="#0b0807"/>
<rect x="1484.30" y="288.60" width="52.20" height="52.90" rx="2.5" fill="#ffffff"/>
<rect x="1340.50" y="417.50" width="65.80" height="65.50" fill="#ffffff" stroke="#231815" stroke-width="1"/>
<rect x="1341.00" y="418.00" width="64.80" height="64.50" rx="8" fill="#0b0807"/>
<rect x="1347.30" y="424.60" width="52.20" height="51.90" rx="2.5" fill="#ffffff"/>
<rect x="1477.50" y="417.50" width="65.80" height="65.50" fill="#ffffff" stroke="#231815" stroke-width="1"/>
<rect x="1478.00" y="418.00" width="64.80" height="64.50" rx="8" fill="#0b0807"/>
<rect x="1484.30" y="424.60" width="52.20" height="51.90" rx="2.5" fill="#ffffff"/>
<circle cx="1412.00" cy="705.50" r="35.40" fill="#42454e" stroke="#0b0807" stroke-width="2.20"/>
<circle cx="1412.00" cy="705.50" r="33.40" fill="none" stroke="#d8d0c8" stroke-width="1"/>
<path d="M1408.70,685.80 L1415.30,685.80 L1415.30,694.70 C1415.30,698.83 1418.67,702.20 1422.80,702.20 L1431.70,702.20 L1431.70,708.80 L1422.80,708.80 C1418.67,708.80 1415.30,712.17 1415.30,716.30 L1415.30,725.20 L1408.70,725.20 L1408.70,716.30 C1408.70,712.17 1405.33,708.80 1401.20,708.80 L1392.30,708.80 L1392.30,702.20 L1401.20,702.20 C1405.33,702.20 1408.70,698.83 1408.70,694.70 Z" fill="#42454e" stroke="#0b0807" stroke-width="2.10" stroke-linejoin="round"/>
<rect x="1487.30" y="670.00" width="90.50" height="107.50" fill="#231815"/>
<rect x="1488.30" y="671.00" width="7.20" height="105.50" fill="#42454e"/>
<rect x="1495.80" y="671.30" width="81.20" height="105.20" fill="#e2e7e2"/>
<text x="1517.99" y="748.59" font-size="73.00" fill="#323640" font-weight="bold">5</text>
<rect x="1477.30" y="818.00" width="39.40" height="12.00" fill="#e2e7e2"/>
<rect x="1477.30" y="983.00" width="39.40" height="12.00" fill="#e2e7e2"/>
<rect x="1477.30" y="1266.80" width="39.40" height="12.00" fill="#e2e7e2"/>
<rect x="1477.30" y="1408.40" width="39.40" height="12.00" fill="#e2e7e2"/>
<rect x="1477.30" y="1621.80" width="39.40" height="12.00" fill="#e2e7e2"/>
<rect x="1477.30" y="1716.00" width="39.40" height="12.00" fill="#e2e7e2"/>
<rect x="1477.30" y="1810.30" width="39.40" height="12.00" fill="#e2e7e2"/>
<rect x="1477.30" y="1904.50" width="39.40" height="12.00" fill="#e2e7e2"/>
<rect x="1477.30" y="1952.00" width="39.40" height="12.00" fill="#e2e7e2"/>
<rect x="1477.30" y="1999.20" width="39.40" height="12.00" fill="#e2e7e2"/>
<text x="1557.79" y="841.50" font-size="51.27" fill="#e2e7e2" font-weight="bold">0</text><path d="M1538.90,806.23 L1544.23,806.23 L1544.23,841.50 L1537.42,841.50 L1537.42,816.03 Q1534.24,819.98 1528.60,821.99 L1528.60,815.33 Q1536.01,812.93 1538.90,806.23 Z" fill="#e2e7e2"/>
<text x="1539.86 1559.79 1568.43" y="945.85" font-size="29.00" fill="#e2e7e2" font-weight="bold">Sig</text>
<text x="1541.94" y="1147.52" font-size="49.43" fill="#e2e7e2" font-weight="bold">0</text>
<text x="1542.19" y="1289.89" font-size="52.45" fill="#e2e7e2" font-weight="bold">5</text>
<text x="1557.50" y="1432.19" font-size="51.84" fill="#e2e7e2" font-weight="bold">0</text><path d="M1539.01,1396.53 L1544.40,1396.53 L1544.40,1432.19 L1537.52,1432.19 L1537.52,1406.45 Q1534.31,1410.44 1528.60,1412.47 L1528.60,1405.73 Q1536.09,1403.31 1539.01,1396.53 Z" fill="#e2e7e2"/>
<text x="1525.21 1557.57" y="1645.70" font-size="51.69" fill="#e2e7e2" font-weight="bold">20</text>
<text x="1525.82 1557.63" y="1739.82" font-size="51.59" fill="#e2e7e2" font-weight="bold">30</text>
<text x="1526.22 1557.57" y="1834.10" font-size="51.69" fill="#e2e7e2" font-weight="bold">40</text>
<text x="1525.41 1557.50" y="1927.99" font-size="51.84" fill="#e2e7e2" font-weight="bold">50</text>
<text x="1525.11 1557.64" y="1976.00" font-size="51.55" fill="#e2e7e2" font-weight="bold">60</text>
<path d="M1524.80,2004.85 a15.05,15.25 0 1 0 30.10,0 a15.05,15.25 0 1 0 -30.10,0 Z M1554.90,2004.85 a15.05,15.25 0 1 0 30.10,0 a15.05,15.25 0 1 0 -30.10,0 Z M1531.00,2004.85 a10.10,9.05 0 1 0 20.20,0 a10.10,9.05 0 1 0 -20.20,0 Z M1557.80,2004.85 a10.10,9.05 0 1 0 20.20,0 a10.10,9.05 0 1 0 -20.20,0 Z" fill="#e2e7e2" fill-rule="evenodd"/>
<rect x="1547.00" y="968.00" width="26.60" height="41.60" fill="#e8c92e"/>
<rect x="1298.40" y="1119.5" width="7.6" height="23.4" fill="#42454e" stroke="#151515" stroke-width="1"/>
<rect x="1305.80" y="1119.00" width="210.90" height="24.00" fill="#c31a21"/>
<rect x="1394.80" y="752.5" width="36" height="1106" fill="#4b4645" stroke="#9d938c" stroke-width="1"/>
<g fill="none" stroke="#f4f6f4" stroke-width="1.3">
<rect x="1345.60" y="678.6" width="132.4" height="290.8"/>
<line x1="1345.60" y1="728.50" x2="1478.00" y2="728.50"/>
<line x1="1345.60" y1="815.50" x2="1478.00" y2="815.50"/>
<line x1="1345.60" y1="832.30" x2="1478.00" y2="832.30"/>
<line x1="1345.60" y1="919.50" x2="1478.00" y2="919.50"/>
</g>
<path d="M1393.50,2152 A38,38 0 0 0 1432.00,2152 Z" fill="#2f3139" stroke="#ffffff" stroke-width="1.6"/>
<rect x="1342.90" y="1856.70" width="138.50" height="296.50" fill="#231815"/>
<rect x="1348.90" y="1862.70" width="126.70" height="43.90" fill="#ffffff"/>
<rect x="1348.90" y="1911.50" width="126.70" height="85.20" fill="#ffffff"/>
<rect x="1348.90" y="2012.60" width="126.70" height="85.20" fill="#ffffff"/>
<rect x="1348.90" y="2103.00" width="126.70" height="44.50" fill="#ffffff"/>
<rect x="1348.90" y="1914.30" width="126.70" height="1.40" fill="#3b2d28"/>
<rect x="1348.90" y="1923.50" width="126.70" height="1.40" fill="#3b2d28"/>
<rect x="1348.90" y="1935.10" width="126.70" height="1.40" fill="#3b2d28"/>
<rect x="1348.90" y="1952.10" width="126.70" height="1.40" fill="#3b2d28"/>
<rect x="1348.90" y="1975.80" width="126.70" height="1.40" fill="#3b2d28"/>
<rect x="1348.90" y="2032.10" width="126.70" height="1.40" fill="#3b2d28"/>
<rect x="1348.90" y="2054.90" width="126.70" height="1.40" fill="#3b2d28"/>
<rect x="1348.90" y="2073.30" width="126.70" height="1.40" fill="#3b2d28"/>
<rect x="1348.90" y="2084.80" width="126.70" height="1.40" fill="#3b2d28"/>
<rect x="1348.90" y="2093.60" width="126.70" height="1.40" fill="#3b2d28"/>
<circle cx="1547.00" cy="2228.00" r="35.20" fill="#42454e" stroke="#0b0807" stroke-width="2.20"/>
<circle cx="1547.00" cy="2228.00" r="33.20" fill="none" stroke="#d8d0c8" stroke-width="1"/>
<path d="M1543.40,2208.10 L1550.60,2208.10 L1550.60,2216.90 C1550.60,2221.03 1553.97,2224.40 1558.10,2224.40 L1566.90,2224.40 L1566.90,2231.60 L1558.10,2231.60 C1553.97,2231.60 1550.60,2234.97 1550.60,2239.10 L1550.60,2247.90 L1543.40,2247.90 L1543.40,2239.10 C1543.40,2234.97 1540.03,2231.60 1535.90,2231.60 L1527.10,2231.60 L1527.10,2224.40 L1535.90,2224.40 C1540.03,2224.40 1543.40,2221.03 1543.40,2216.90 Z" fill="#42454e" stroke="#0b0807" stroke-width="2.10" stroke-linejoin="round"/>
<rect x="1888.80" y="216.00" width="2.40" height="276.00" fill="#e2e7e2"/>
<rect x="1888.80" y="647.00" width="2.40" height="1630.00" fill="#e2e7e2"/>
<rect x="1892.90" y="216.00" width="2.80" height="2061.00" fill="#0b0807"/>
<rect x="1635.00" y="235.00" width="76.00" height="36.20" rx="18.10" fill="#e3911f"/>
<rect x="1772.40" y="235.00" width="76.00" height="36.20" rx="18.10" fill="#e3911f"/>
<rect x="1635.00" y="371.00" width="76.00" height="36.20" rx="18.10" fill="#e3911f"/>
<rect x="1772.40" y="371.00" width="76.00" height="36.20" rx="18.10" fill="#e3911f"/>
<text x="1667.64 1687.74" y="264.18" font-size="31.16" fill="#42454e" font-weight="bold" stroke="#42454e" stroke-width="0.7">/5</text><path d="M1647.56,242.74 L1650.80,242.74 L1650.80,264.18 L1646.66,264.18 L1646.66,248.70 Q1644.73,251.10 1641.30,252.32 L1641.30,248.27 Q1645.80,246.81 1647.56,242.74 Z" fill="#42454e" stroke="#42454e" stroke-width="0.7"/>
<text x="1778.52 1807.39 1827.60" y="264.18" font-size="31.16" fill="#42454e" font-weight="bold" stroke="#42454e" stroke-width="0.7">2/6</text>
<text x="1640.58 1668.75 1688.24" y="400.18" font-size="31.16" fill="#42454e" font-weight="bold" stroke="#42454e" stroke-width="0.7">3/7</text>
<text x="1777.93 1805.82 1825.03" y="400.18" font-size="31.16" fill="#42454e" font-weight="bold" stroke="#42454e" stroke-width="0.7">4/8</text>
<rect x="1640.50" y="281.50" width="65.80" height="66.50" fill="#ffffff" stroke="#231815" stroke-width="1"/>
<rect x="1641.00" y="282.00" width="64.80" height="65.50" rx="8" fill="#0b0807"/>
<rect x="1647.30" y="288.60" width="52.20" height="52.90" rx="2.5" fill="#ffffff"/>
<rect x="1777.50" y="281.50" width="65.80" height="66.50" fill="#ffffff" stroke="#231815" stroke-width="1"/>
<rect x="1778.00" y="282.00" width="64.80" height="65.50" rx="8" fill="#0b0807"/>
<rect x="1784.30" y="288.60" width="52.20" height="52.90" rx="2.5" fill="#ffffff"/>
<rect x="1640.50" y="417.50" width="65.80" height="65.50" fill="#ffffff" stroke="#231815" stroke-width="1"/>
<rect x="1641.00" y="418.00" width="64.80" height="64.50" rx="8" fill="#0b0807"/>
<rect x="1647.30" y="424.60" width="52.20" height="51.90" rx="2.5" fill="#ffffff"/>
<rect x="1777.50" y="417.50" width="65.80" height="65.50" fill="#ffffff" stroke="#231815" stroke-width="1"/>
<rect x="1778.00" y="418.00" width="64.80" height="64.50" rx="8" fill="#0b0807"/>
<rect x="1784.30" y="424.60" width="52.20" height="51.90" rx="2.5" fill="#ffffff"/>
<circle cx="1712.00" cy="705.50" r="35.40" fill="#42454e" stroke="#0b0807" stroke-width="2.20"/>
<circle cx="1712.00" cy="705.50" r="33.40" fill="none" stroke="#d8d0c8" stroke-width="1"/>
<path d="M1708.70,685.80 L1715.30,685.80 L1715.30,694.70 C1715.30,698.83 1718.67,702.20 1722.80,702.20 L1731.70,702.20 L1731.70,708.80 L1722.80,708.80 C1718.67,708.80 1715.30,712.17 1715.30,716.30 L1715.30,725.20 L1708.70,725.20 L1708.70,716.30 C1708.70,712.17 1705.33,708.80 1701.20,708.80 L1692.30,708.80 L1692.30,702.20 L1701.20,702.20 C1705.33,702.20 1708.70,698.83 1708.70,694.70 Z" fill="#42454e" stroke="#0b0807" stroke-width="2.10" stroke-linejoin="round"/>
<rect x="1787.30" y="670.00" width="90.50" height="107.50" fill="#231815"/>
<rect x="1788.30" y="671.00" width="7.20" height="105.50" fill="#42454e"/>
<rect x="1795.80" y="671.30" width="81.20" height="105.20" fill="#e2e7e2"/>
<text x="1810.48" y="748.59" font-size="73.00" fill="#323640" font-weight="bold">6</text>
<rect x="1777.30" y="818.00" width="39.40" height="12.00" fill="#e2e7e2"/>
<rect x="1777.30" y="983.00" width="39.40" height="12.00" fill="#e2e7e2"/>
<rect x="1777.30" y="1266.80" width="39.40" height="12.00" fill="#e2e7e2"/>
<rect x="1777.30" y="1408.40" width="39.40" height="12.00" fill="#e2e7e2"/>
<rect x="1777.30" y="1621.80" width="39.40" height="12.00" fill="#e2e7e2"/>
<rect x="1777.30" y="1716.00" width="39.40" height="12.00" fill="#e2e7e2"/>
<rect x="1777.30" y="1810.30" width="39.40" height="12.00" fill="#e2e7e2"/>
<rect x="1777.30" y="1904.50" width="39.40" height="12.00" fill="#e2e7e2"/>
<rect x="1777.30" y="1952.00" width="39.40" height="12.00" fill="#e2e7e2"/>
<rect x="1777.30" y="1999.20" width="39.40" height="12.00" fill="#e2e7e2"/>
<text x="1857.79" y="841.50" font-size="51.27" fill="#e2e7e2" font-weight="bold">0</text><path d="M1838.90,806.23 L1844.23,806.23 L1844.23,841.50 L1837.42,841.50 L1837.42,816.03 Q1834.24,819.98 1828.60,821.99 L1828.60,815.33 Q1836.01,812.93 1838.90,806.23 Z" fill="#e2e7e2"/>
<text x="1839.86 1859.79 1868.43" y="945.85" font-size="29.00" fill="#e2e7e2" font-weight="bold">Sig</text>
<text x="1841.94" y="1147.52" font-size="49.43" fill="#e2e7e2" font-weight="bold">0</text>
<text x="1842.19" y="1289.89" font-size="52.45" fill="#e2e7e2" font-weight="bold">5</text>
<text x="1857.50" y="1432.19" font-size="51.84" fill="#e2e7e2" font-weight="bold">0</text><path d="M1839.01,1396.53 L1844.40,1396.53 L1844.40,1432.19 L1837.52,1432.19 L1837.52,1406.45 Q1834.31,1410.44 1828.60,1412.47 L1828.60,1405.73 Q1836.09,1403.31 1839.01,1396.53 Z" fill="#e2e7e2"/>
<text x="1825.21 1857.57" y="1645.70" font-size="51.69" fill="#e2e7e2" font-weight="bold">20</text>
<text x="1825.82 1857.63" y="1739.82" font-size="51.59" fill="#e2e7e2" font-weight="bold">30</text>
<text x="1826.22 1857.57" y="1834.10" font-size="51.69" fill="#e2e7e2" font-weight="bold">40</text>
<text x="1825.41 1857.50" y="1927.99" font-size="51.84" fill="#e2e7e2" font-weight="bold">50</text>
<text x="1825.11 1857.64" y="1976.00" font-size="51.55" fill="#e2e7e2" font-weight="bold">60</text>
<path d="M1824.80,2004.85 a15.05,15.25 0 1 0 30.10,0 a15.05,15.25 0 1 0 -30.10,0 Z M1854.90,2004.85 a15.05,15.25 0 1 0 30.10,0 a15.05,15.25 0 1 0 -30.10,0 Z M1831.00,2004.85 a10.10,9.05 0 1 0 20.20,0 a10.10,9.05 0 1 0 -20.20,0 Z M1857.80,2004.85 a10.10,9.05 0 1 0 20.20,0 a10.10,9.05 0 1 0 -20.20,0 Z" fill="#e2e7e2" fill-rule="evenodd"/>
<rect x="1847.00" y="968.00" width="26.60" height="41.60" fill="#e8c92e"/>
<rect x="1598.40" y="1119.5" width="7.6" height="23.4" fill="#42454e" stroke="#151515" stroke-width="1"/>
<rect x="1605.80" y="1119.00" width="210.90" height="24.00" fill="#c31a21"/>
<rect x="1694.80" y="752.5" width="36" height="1106" fill="#4b4645" stroke="#9d938c" stroke-width="1"/>
<g fill="none" stroke="#f4f6f4" stroke-width="1.3">
<rect x="1645.60" y="678.6" width="132.4" height="290.8"/>
<line x1="1645.60" y1="728.50" x2="1778.00" y2="728.50"/>
<line x1="1645.60" y1="815.50" x2="1778.00" y2="815.50"/>
<line x1="1645.60" y1="832.30" x2="1778.00" y2="832.30"/>
<line x1="1645.60" y1="919.50" x2="1778.00" y2="919.50"/>
</g>
<path d="M1693.50,2152 A38,38 0 0 0 1732.00,2152 Z" fill="#2f3139" stroke="#ffffff" stroke-width="1.6"/>
<rect x="1642.90" y="1856.70" width="138.50" height="296.50" fill="#231815"/>
<rect x="1648.90" y="1862.70" width="126.70" height="43.90" fill="#ffffff"/>
<rect x="1648.90" y="1911.50" width="126.70" height="85.20" fill="#ffffff"/>
<rect x="1648.90" y="2012.60" width="126.70" height="85.20" fill="#ffffff"/>
<rect x="1648.90" y="2103.00" width="126.70" height="44.50" fill="#ffffff"/>
<rect x="1648.90" y="1914.30" width="126.70" height="1.40" fill="#3b2d28"/>
<rect x="1648.90" y="1923.50" width="126.70" height="1.40" fill="#3b2d28"/>
<rect x="1648.90" y="1935.10" width="126.70" height="1.40" fill="#3b2d28"/>
<rect x="1648.90" y="1952.10" width="126.70" height="1.40" fill="#3b2d28"/>
<rect x="1648.90" y="1975.80" width="126.70" height="1.40" fill="#3b2d28"/>
<rect x="1648.90" y="2032.10" width="126.70" height="1.40" fill="#3b2d28"/>
<rect x="1648.90" y="2054.90" width="126.70" height="1.40" fill="#3b2d28"/>
<rect x="1648.90" y="2073.30" width="126.70" height="1.40" fill="#3b2d28"/>
<rect x="1648.90" y="2084.80" width="126.70" height="1.40" fill="#3b2d28"/>
<rect x="1648.90" y="2093.60" width="126.70" height="1.40" fill="#3b2d28"/>
<rect x="2188.80" y="216.00" width="2.40" height="276.00" fill="#e2e7e2"/>
<rect x="2188.80" y="647.00" width="2.40" height="1630.00" fill="#e2e7e2"/>
<rect x="2192.90" y="216.00" width="2.80" height="2061.00" fill="#0b0807"/>
<rect x="1935.00" y="235.00" width="76.00" height="36.20" rx="18.10" fill="#e3911f"/>
<rect x="2072.40" y="235.00" width="76.00" height="36.20" rx="18.10" fill="#e3911f"/>
<rect x="1935.00" y="371.00" width="76.00" height="36.20" rx="18.10" fill="#e3911f"/>
<rect x="2072.40" y="371.00" width="76.00" height="36.20" rx="18.10" fill="#e3911f"/>
<text x="1967.64 1987.74" y="264.18" font-size="31.16" fill="#42454e" font-weight="bold" stroke="#42454e" stroke-width="0.7">/5</text><path d="M1947.56,242.74 L1950.80,242.74 L1950.80,264.18 L1946.66,264.18 L1946.66,248.70 Q1944.73,251.10 1941.30,252.32 L1941.30,248.27 Q1945.80,246.81 1947.56,242.74 Z" fill="#42454e" stroke="#42454e" stroke-width="0.7"/>
<text x="2078.52 2107.39 2127.60" y="264.18" font-size="31.16" fill="#42454e" font-weight="bold" stroke="#42454e" stroke-width="0.7">2/6</text>
<text x="1940.58 1968.75 1988.24" y="400.18" font-size="31.16" fill="#42454e" font-weight="bold" stroke="#42454e" stroke-width="0.7">3/7</text>
<text x="2077.93 2105.82 2125.03" y="400.18" font-size="31.16" fill="#42454e" font-weight="bold" stroke="#42454e" stroke-width="0.7">4/8</text>
<rect x="1940.50" y="281.50" width="65.80" height="66.50" fill="#ffffff" stroke="#231815" stroke-width="1"/>
<rect x="1941.00" y="282.00" width="64.80" height="65.50" rx="8" fill="#0b0807"/>
<rect x="1947.30" y="288.60" width="52.20" height="52.90" rx="2.5" fill="#ffffff"/>
<rect x="2077.50" y="281.50" width="65.80" height="66.50" fill="#ffffff" stroke="#231815" stroke-width="1"/>
<rect x="2078.00" y="282.00" width="64.80" height="65.50" rx="8" fill="#0b0807"/>
<rect x="2084.30" y="288.60" width="52.20" height="52.90" rx="2.5" fill="#ffffff"/>
<rect x="1940.50" y="417.50" width="65.80" height="65.50" fill="#ffffff" stroke="#231815" stroke-width="1"/>
<rect x="1941.00" y="418.00" width="64.80" height="64.50" rx="8" fill="#0b0807"/>
<rect x="1947.30" y="424.60" width="52.20" height="51.90" rx="2.5" fill="#ffffff"/>
<rect x="2077.50" y="417.50" width="65.80" height="65.50" fill="#ffffff" stroke="#231815" stroke-width="1"/>
<rect x="2078.00" y="418.00" width="64.80" height="64.50" rx="8" fill="#0b0807"/>
<rect x="2084.30" y="424.60" width="52.20" height="51.90" rx="2.5" fill="#ffffff"/>
<circle cx="2012.00" cy="705.50" r="35.40" fill="#42454e" stroke="#0b0807" stroke-width="2.20"/>
<circle cx="2012.00" cy="705.50" r="33.40" fill="none" stroke="#d8d0c8" stroke-width="1"/>
<path d="M2008.70,685.80 L2015.30,685.80 L2015.30,694.70 C2015.30,698.83 2018.67,702.20 2022.80,702.20 L2031.70,702.20 L2031.70,708.80 L2022.80,708.80 C2018.67,708.80 2015.30,712.17 2015.30,716.30 L2015.30,725.20 L2008.70,725.20 L2008.70,716.30 C2008.70,712.17 2005.33,708.80 2001.20,708.80 L1992.30,708.80 L1992.30,702.20 L2001.20,702.20 C2005.33,702.20 2008.70,698.83 2008.70,694.70 Z" fill="#42454e" stroke="#0b0807" stroke-width="2.10" stroke-linejoin="round"/>
<rect x="2087.30" y="670.00" width="90.50" height="107.50" fill="#231815"/>
<rect x="2088.30" y="671.00" width="7.20" height="105.50" fill="#42454e"/>
<rect x="2095.80" y="671.30" width="81.20" height="105.20" fill="#e2e7e2"/>
<text x="2116.54" y="749.30" font-size="73.00" fill="#323640" font-weight="bold">7</text>
<rect x="2077.30" y="818.00" width="39.40" height="12.00" fill="#e2e7e2"/>
<rect x="2077.30" y="983.00" width="39.40" height="12.00" fill="#e2e7e2"/>
<rect x="2077.30" y="1266.80" width="39.40" height="12.00" fill="#e2e7e2"/>
<rect x="2077.30" y="1408.40" width="39.40" height="12.00" fill="#e2e7e2"/>
<rect x="2077.30" y="1621.80" width="39.40" height="12.00" fill="#e2e7e2"/>
<rect x="2077.30" y="1716.00" width="39.40" height="12.00" fill="#e2e7e2"/>
<rect x="2077.30" y="1810.30" width="39.40" height="12.00" fill="#e2e7e2"/>
<rect x="2077.30" y="1904.50" width="39.40" height="12.00" fill="#e2e7e2"/>
<rect x="2077.30" y="1952.00" width="39.40" height="12.00" fill="#e2e7e2"/>
<rect x="2077.30" y="1999.20" width="39.40" height="12.00" fill="#e2e7e2"/>
<text x="2157.79" y="841.50" font-size="51.27" fill="#e2e7e2" font-weight="bold">0</text><path d="M2138.90,806.23 L2144.23,806.23 L2144.23,841.50 L2137.42,841.50 L2137.42,816.03 Q2134.24,819.98 2128.60,821.99 L2128.60,815.33 Q2136.01,812.93 2138.90,806.23 Z" fill="#e2e7e2"/>
<text x="2139.86 2159.79 2168.43" y="945.85" font-size="29.00" fill="#e2e7e2" font-weight="bold">Sig</text>
<text x="2141.94" y="1147.52" font-size="49.43" fill="#e2e7e2" font-weight="bold">0</text>
<text x="2142.19" y="1289.89" font-size="52.45" fill="#e2e7e2" font-weight="bold">5</text>
<text x="2157.50" y="1432.19" font-size="51.84" fill="#e2e7e2" font-weight="bold">0</text><path d="M2139.01,1396.53 L2144.40,1396.53 L2144.40,1432.19 L2137.52,1432.19 L2137.52,1406.45 Q2134.31,1410.44 2128.60,1412.47 L2128.60,1405.73 Q2136.09,1403.31 2139.01,1396.53 Z" fill="#e2e7e2"/>
<text x="2125.21 2157.57" y="1645.70" font-size="51.69" fill="#e2e7e2" font-weight="bold">20</text>
<text x="2125.82 2157.63" y="1739.82" font-size="51.59" fill="#e2e7e2" font-weight="bold">30</text>
<text x="2126.22 2157.57" y="1834.10" font-size="51.69" fill="#e2e7e2" font-weight="bold">40</text>
<text x="2125.41 2157.50" y="1927.99" font-size="51.84" fill="#e2e7e2" font-weight="bold">50</text>
<text x="2125.11 2157.64" y="1976.00" font-size="51.55" fill="#e2e7e2" font-weight="bold">60</text>
<path d="M2124.80,2004.85 a15.05,15.25 0 1 0 30.10,0 a15.05,15.25 0 1 0 -30.10,0 Z M2154.90,2004.85 a15.05,15.25 0 1 0 30.10,0 a15.05,15.25 0 1 0 -30.10,0 Z M2131.00,2004.85 a10.10,9.05 0 1 0 20.20,0 a10.10,9.05 0 1 0 -20.20,0 Z M2157.80,2004.85 a10.10,9.05 0 1 0 20.20,0 a10.10,9.05 0 1 0 -20.20,0 Z" fill="#e2e7e2" fill-rule="evenodd"/>
<rect x="2147.00" y="968.00" width="26.60" height="41.60" fill="#e8c92e"/>
<rect x="1898.40" y="1119.5" width="7.6" height="23.4" fill="#42454e" stroke="#151515" stroke-width="1"/>
<rect x="1905.80" y="1119.00" width="210.90" height="24.00" fill="#c31a21"/>
<rect x="1994.80" y="752.5" width="36" height="1106" fill="#4b4645" stroke="#9d938c" stroke-width="1"/>
<g fill="none" stroke="#f4f6f4" stroke-width="1.3">
<rect x="1945.60" y="678.6" width="132.4" height="290.8"/>
<line x1="1945.60" y1="728.50" x2="2078.00" y2="728.50"/>
<line x1="1945.60" y1="815.50" x2="2078.00" y2="815.50"/>
<line x1="1945.60" y1="832.30" x2="2078.00" y2="832.30"/>
<line x1="1945.60" y1="919.50" x2="2078.00" y2="919.50"/>
</g>
<path d="M1993.50,2152 A38,38 0 0 0 2032.00,2152 Z" fill="#2f3139" stroke="#ffffff" stroke-width="1.6"/>
<rect x="1942.90" y="1856.70" width="138.50" height="296.50" fill="#231815"/>
<rect x="1948.90" y="1862.70" width="126.70" height="43.90" fill="#ffffff"/>
<rect x="1948.90" y="1911.50" width="126.70" height="85.20" fill="#ffffff"/>
<rect x="1948.90" y="2012.60" width="126.70" height="85.20" fill="#ffffff"/>
<rect x="1948.90" y="2103.00" width="126.70" height="44.50" fill="#ffffff"/>
<rect x="1948.90" y="1914.30" width="126.70" height="1.40" fill="#3b2d28"/>
<rect x="1948.90" y="1923.50" width="126.70" height="1.40" fill="#3b2d28"/>
<rect x="1948.90" y="1935.10" width="126.70" height="1.40" fill="#3b2d28"/>
<rect x="1948.90" y="1952.10" width="126.70" height="1.40" fill="#3b2d28"/>
<rect x="1948.90" y="1975.80" width="126.70" height="1.40" fill="#3b2d28"/>
<rect x="1948.90" y="2032.10" width="126.70" height="1.40" fill="#3b2d28"/>
<rect x="1948.90" y="2054.90" width="126.70" height="1.40" fill="#3b2d28"/>
<rect x="1948.90" y="2073.30" width="126.70" height="1.40" fill="#3b2d28"/>
<rect x="1948.90" y="2084.80" width="126.70" height="1.40" fill="#3b2d28"/>
<rect x="1948.90" y="2093.60" width="126.70" height="1.40" fill="#3b2d28"/>
<rect x="2488.80" y="216.00" width="2.40" height="276.00" fill="#e2e7e2"/>
<rect x="2488.80" y="647.00" width="2.40" height="1630.00" fill="#e2e7e2"/>
<rect x="2492.90" y="216.00" width="2.80" height="2061.00" fill="#0b0807"/>
<rect x="2235.00" y="235.00" width="76.00" height="36.20" rx="18.10" fill="#e3911f"/>
<rect x="2372.40" y="235.00" width="76.00" height="36.20" rx="18.10" fill="#e3911f"/>
<rect x="2235.00" y="371.00" width="76.00" height="36.20" rx="18.10" fill="#e3911f"/>
<rect x="2372.40" y="371.00" width="76.00" height="36.20" rx="18.10" fill="#e3911f"/>
<text x="2267.64 2287.74" y="264.18" font-size="31.16" fill="#42454e" font-weight="bold" stroke="#42454e" stroke-width="0.7">/5</text><path d="M2247.56,242.74 L2250.80,242.74 L2250.80,264.18 L2246.66,264.18 L2246.66,248.70 Q2244.73,251.10 2241.30,252.32 L2241.30,248.27 Q2245.80,246.81 2247.56,242.74 Z" fill="#42454e" stroke="#42454e" stroke-width="0.7"/>
<text x="2378.52 2407.39 2427.60" y="264.18" font-size="31.16" fill="#42454e" font-weight="bold" stroke="#42454e" stroke-width="0.7">2/6</text>
<text x="2240.58 2268.75 2288.24" y="400.18" font-size="31.16" fill="#42454e" font-weight="bold" stroke="#42454e" stroke-width="0.7">3/7</text>
<text x="2377.93 2405.82 2425.03" y="400.18" font-size="31.16" fill="#42454e" font-weight="bold" stroke="#42454e" stroke-width="0.7">4/8</text>
<rect x="2240.50" y="281.50" width="65.80" height="66.50" fill="#ffffff" stroke="#231815" stroke-width="1"/>
<rect x="2241.00" y="282.00" width="64.80" height="65.50" rx="8" fill="#0b0807"/>
<rect x="2247.30" y="288.60" width="52.20" height="52.90" rx="2.5" fill="#ffffff"/>
<rect x="2377.50" y="281.50" width="65.80" height="66.50" fill="#ffffff" stroke="#231815" stroke-width="1"/>
<rect x="2378.00" y="282.00" width="64.80" height="65.50" rx="8" fill="#0b0807"/>
<rect x="2384.30" y="288.60" width="52.20" height="52.90" rx="2.5" fill="#ffffff"/>
<rect x="2240.50" y="417.50" width="65.80" height="65.50" fill="#ffffff" stroke="#231815" stroke-width="1"/>
<rect x="2241.00" y="418.00" width="64.80" height="64.50" rx="8" fill="#0b0807"/>
<rect x="2247.30" y="424.60" width="52.20" height="51.90" rx="2.5" fill="#ffffff"/>
<rect x="2377.50" y="417.50" width="65.80" height="65.50" fill="#ffffff" stroke="#231815" stroke-width="1"/>
<rect x="2378.00" y="418.00" width="64.80" height="64.50" rx="8" fill="#0b0807"/>
<rect x="2384.30" y="424.60" width="52.20" height="51.90" rx="2.5" fill="#ffffff"/>
<circle cx="2312.00" cy="705.50" r="35.40" fill="#42454e" stroke="#0b0807" stroke-width="2.20"/>
<circle cx="2312.00" cy="705.50" r="33.40" fill="none" stroke="#d8d0c8" stroke-width="1"/>
<path d="M2308.70,685.80 L2315.30,685.80 L2315.30,694.70 C2315.30,698.83 2318.68,702.20 2322.80,702.20 L2331.70,702.20 L2331.70,708.80 L2322.80,708.80 C2318.68,708.80 2315.30,712.17 2315.30,716.30 L2315.30,725.20 L2308.70,725.20 L2308.70,716.30 C2308.70,712.17 2305.32,708.80 2301.20,708.80 L2292.30,708.80 L2292.30,702.20 L2301.20,702.20 C2305.32,702.20 2308.70,698.83 2308.70,694.70 Z" fill="#42454e" stroke="#0b0807" stroke-width="2.10" stroke-linejoin="round"/>
<rect x="2387.30" y="670.00" width="90.50" height="107.50" fill="#231815"/>
<rect x="2388.30" y="671.00" width="7.20" height="105.50" fill="#42454e"/>
<rect x="2395.80" y="671.30" width="81.20" height="105.20" fill="#e2e7e2"/>
<text x="2416.66" y="748.59" font-size="73.00" fill="#323640" font-weight="bold">8</text>
<rect x="2377.30" y="818.00" width="39.40" height="12.00" fill="#e2e7e2"/>
<rect x="2377.30" y="983.00" width="39.40" height="12.00" fill="#e2e7e2"/>
<rect x="2377.30" y="1266.80" width="39.40" height="12.00" fill="#e2e7e2"/>
<rect x="2377.30" y="1408.40" width="39.40" height="12.00" fill="#e2e7e2"/>
<rect x="2377.30" y="1621.80" width="39.40" height="12.00" fill="#e2e7e2"/>
<rect x="2377.30" y="1716.00" width="39.40" height="12.00" fill="#e2e7e2"/>
<rect x="2377.30" y="1810.30" width="39.40" height="12.00" fill="#e2e7e2"/>
<rect x="2377.30" y="1904.50" width="39.40" height="12.00" fill="#e2e7e2"/>
<rect x="2377.30" y="1952.00" width="39.40" height="12.00" fill="#e2e7e2"/>
<rect x="2377.30" y="1999.20" width="39.40" height="12.00" fill="#e2e7e2"/>
<text x="2457.79" y="841.50" font-size="51.27" fill="#e2e7e2" font-weight="bold">0</text><path d="M2438.90,806.23 L2444.23,806.23 L2444.23,841.50 L2437.42,841.50 L2437.42,816.03 Q2434.24,819.98 2428.60,821.99 L2428.60,815.33 Q2436.01,812.93 2438.90,806.23 Z" fill="#e2e7e2"/>
<text x="2439.86 2459.79 2468.43" y="945.85" font-size="29.00" fill="#e2e7e2" font-weight="bold">Sig</text>
<text x="2441.94" y="1147.52" font-size="49.43" fill="#e2e7e2" font-weight="bold">0</text>
<text x="2442.19" y="1289.89" font-size="52.45" fill="#e2e7e2" font-weight="bold">5</text>
<text x="2457.50" y="1432.19" font-size="51.84" fill="#e2e7e2" font-weight="bold">0</text><path d="M2439.01,1396.53 L2444.40,1396.53 L2444.40,1432.19 L2437.52,1432.19 L2437.52,1406.45 Q2434.31,1410.44 2428.60,1412.47 L2428.60,1405.73 Q2436.09,1403.31 2439.01,1396.53 Z" fill="#e2e7e2"/>
<text x="2425.21 2457.57" y="1645.70" font-size="51.69" fill="#e2e7e2" font-weight="bold">20</text>
<text x="2425.82 2457.63" y="1739.82" font-size="51.59" fill="#e2e7e2" font-weight="bold">30</text>
<text x="2426.22 2457.57" y="1834.10" font-size="51.69" fill="#e2e7e2" font-weight="bold">40</text>
<text x="2425.41 2457.50" y="1927.99" font-size="51.84" fill="#e2e7e2" font-weight="bold">50</text>
<text x="2425.11 2457.64" y="1976.00" font-size="51.55" fill="#e2e7e2" font-weight="bold">60</text>
<path d="M2424.80,2004.85 a15.05,15.25 0 1 0 30.10,0 a15.05,15.25 0 1 0 -30.10,0 Z M2454.90,2004.85 a15.05,15.25 0 1 0 30.10,0 a15.05,15.25 0 1 0 -30.10,0 Z M2431.00,2004.85 a10.10,9.05 0 1 0 20.20,0 a10.10,9.05 0 1 0 -20.20,0 Z M2457.80,2004.85 a10.10,9.05 0 1 0 20.20,0 a10.10,9.05 0 1 0 -20.20,0 Z" fill="#e2e7e2" fill-rule="evenodd"/>
<rect x="2447.00" y="968.00" width="26.60" height="41.60" fill="#e8c92e"/>
<rect x="2198.40" y="1119.5" width="7.6" height="23.4" fill="#42454e" stroke="#151515" stroke-width="1"/>
<rect x="2205.80" y="1119.00" width="210.90" height="24.00" fill="#c31a21"/>
<rect x="2294.80" y="752.5" width="36" height="1106" fill="#4b4645" stroke="#9d938c" stroke-width="1"/>
<g fill="none" stroke="#f4f6f4" stroke-width="1.3">
<rect x="2245.60" y="678.6" width="132.4" height="290.8"/>
<line x1="2245.60" y1="728.50" x2="2378.00" y2="728.50"/>
<line x1="2245.60" y1="815.50" x2="2378.00" y2="815.50"/>
<line x1="2245.60" y1="832.30" x2="2378.00" y2="832.30"/>
<line x1="2245.60" y1="919.50" x2="2378.00" y2="919.50"/>
</g>
<path d="M2293.50,2152 A38,38 0 0 0 2332.00,2152 Z" fill="#2f3139" stroke="#ffffff" stroke-width="1.6"/>
<rect x="2242.90" y="1856.70" width="138.50" height="296.50" fill="#231815"/>
<rect x="2248.90" y="1862.70" width="126.70" height="43.90" fill="#ffffff"/>
<rect x="2248.90" y="1911.50" width="126.70" height="85.20" fill="#ffffff"/>
<rect x="2248.90" y="2012.60" width="126.70" height="85.20" fill="#ffffff"/>
<rect x="2248.90" y="2103.00" width="126.70" height="44.50" fill="#ffffff"/>
<rect x="2248.90" y="1914.30" width="126.70" height="1.40" fill="#3b2d28"/>
<rect x="2248.90" y="1923.50" width="126.70" height="1.40" fill="#3b2d28"/>
<rect x="2248.90" y="1935.10" width="126.70" height="1.40" fill="#3b2d28"/>
<rect x="2248.90" y="1952.10" width="126.70" height="1.40" fill="#3b2d28"/>
<rect x="2248.90" y="1975.80" width="126.70" height="1.40" fill="#3b2d28"/>
<rect x="2248.90" y="2032.10" width="126.70" height="1.40" fill="#3b2d28"/>
<rect x="2248.90" y="2054.90" width="126.70" height="1.40" fill="#3b2d28"/>
<rect x="2248.90" y="2073.30" width="126.70" height="1.40" fill="#3b2d28"/>
<rect x="2248.90" y="2084.80" width="126.70" height="1.40" fill="#3b2d28"/>
<rect x="2248.90" y="2093.60" width="126.70" height="1.40" fill="#3b2d28"/>
<rect x="2535.40" y="235.20" width="75.80" height="36.00" rx="18.00" fill="#e3911f"/>
<path d="M2550.24,240.90 L2553.88,240.90 L2553.88,265.00 L2549.22,265.00 L2549.22,247.60 Q2547.06,250.30 2543.20,251.67 L2543.20,247.12 Q2548.26,245.48 2550.24,240.90 Z" fill="#42454e"/>
<text x="2585.87" y="265.00" font-size="35.03" fill="#42454e" font-weight="bold">4</text>
<path d="M2560.3,256.3 C2563,251.5 2566.5,249.5 2570,252.5 C2573.5,256 2577.5,259 2581.2,253" fill="none" stroke="#42454e" stroke-width="3.2"/>
<rect x="2540.80" y="281.70" width="65.00" height="65.80" fill="#ffffff" stroke="#231815" stroke-width="1"/>
<rect x="2541.30" y="282.20" width="64.00" height="64.80" rx="8" fill="#0b0807"/>
<rect x="2547.60" y="288.80" width="51.40" height="52.20" rx="2.5" fill="#ffffff"/>
<rect x="2535.40" y="370.90" width="75.80" height="36.60" rx="18.30" fill="#56a43a"/>
<text x="2540.16" y="400.07" font-size="33.97" fill="#42454e" font-weight="bold">5</text>
<text x="2585.34" y="400.07" font-size="33.47" fill="#42454e" font-weight="bold">8</text>
<path d="M2560.3,392.3 C2563,387.5 2566.5,385.5 2570,388.5 C2573.5,392 2577.5,395 2581.2,389" fill="none" stroke="#42454e" stroke-width="3.2"/>
<rect x="2540.80" y="418.20" width="65.00" height="64.80" fill="#ffffff" stroke="#231815" stroke-width="1"/>
<rect x="2541.30" y="418.70" width="64.00" height="63.80" rx="8" fill="#0b0807"/>
<rect x="2547.60" y="425.30" width="51.40" height="51.20" rx="2.5" fill="#ffffff"/>
<rect x="2495.70" y="552.00" width="145.60" height="5.00" fill="#e2e7e2"/>
<rect x="2535.40" y="560.00" width="75.80" height="36.00" rx="18.00" fill="#ebd14a"/>
<circle cx="2558.2" cy="578" r="15" fill="#42454e"/>
<circle cx="2558.2" cy="578" r="8" fill="#ffffff"/>
<rect x="2570.00" y="574.20" width="38.00" height="7.30" fill="#42454e"/>
<rect x="2587.30" y="566.80" width="3.70" height="7.50" fill="#42454e"/>
<rect x="2595.80" y="566.80" width="3.00" height="7.50" fill="#42454e"/>
<rect x="2601.00" y="566.80" width="4.80" height="7.50" fill="#42454e"/>
<rect x="2541.50" y="608.00" width="63.80" height="63.30" fill="#ffffff" stroke="#231815" stroke-width="1"/>
<rect x="2542.00" y="608.50" width="62.80" height="62.30" rx="8" fill="#0b0807"/>
<rect x="2548.30" y="615.10" width="50.20" height="49.70" rx="2.5" fill="#ffffff"/>
<rect x="2537.70" y="701.00" width="27.00" height="42.00" fill="#e3dd3c"/>
<rect x="2537.70" y="777.80" width="27.00" height="42.20" fill="#e3dd3c"/>
<circle cx="2605.4" cy="722.1" r="21.5" fill="none" stroke="#e2e7e2" stroke-width="4"/>
<circle cx="2605.4" cy="798.9" r="21.5" fill="none" stroke="#e2e7e2" stroke-width="4"/>
<path d="M2604.41,708.70 L2608.51,708.70 L2608.51,735.80 L2603.28,735.80 L2603.28,716.23 Q2600.84,719.27 2596.50,720.81 L2596.50,715.69 Q2602.19,713.85 2604.41,708.70 Z" fill="#e2e7e2"/>
<text x="2594.75" y="812.20" font-size="38.81" fill="#e2e7e2" font-weight="bold">2</text>
<text x="2534.42 2562.42 2588.63 2613.01" y="865.18" font-size="32.63" fill="#e2e7e2" font-weight="bold">MODE</text>
<rect x="2495.70" y="876.00" width="145.60" height="4.00" fill="#e2e7e2"/>
<circle cx="2587.00" cy="2228.00" r="35.20" fill="#42454e" stroke="#0b0807" stroke-width="2.20"/>
<circle cx="2587.00" cy="2228.00" r="33.20" fill="none" stroke="#d8d0c8" stroke-width="1"/>
<path d="M2583.40,2208.10 L2590.60,2208.10 L2590.60,2216.90 C2590.60,2221.03 2593.97,2224.40 2598.10,2224.40 L2606.90,2224.40 L2606.90,2231.60 L2598.10,2231.60 C2593.97,2231.60 2590.60,2234.97 2590.60,2239.10 L2590.60,2247.90 L2583.40,2247.90 L2583.40,2239.10 C2583.40,2234.97 2580.03,2231.60 2575.90,2231.60 L2567.10,2231.60 L2567.10,2224.40 L2575.90,2224.40 C2580.03,2224.40 2583.40,2221.03 2583.40,2216.90 Z" fill="#42454e" stroke="#0b0807" stroke-width="2.10" stroke-linejoin="round"/>
<rect x="89.00" y="2276.80" width="2555.00" height="3.80" fill="#0b0807"/>
<rect x="89.00" y="2280.60" width="2555.00" height="181.40" fill="#343741"/>
<rect x="92.80" y="2283.00" width="2548.20" height="176.00" fill="#c18c48"/>
<rect x="85.00" y="2455.00" width="4.00" height="7.00" fill="#0b0807"/>
<path d="M130.3,2296.0 C183.2,2297.1 236.1,2298.8 289.0,2299.4 C457.0,2301.4 625.0,2303.0 793.0,2304.0 C882.3,2304.5 971.7,2303.4 1061.0,2304.0 C1174.0,2304.7 1287.0,2306.9 1400.0,2308.0 C1524.0,2309.2 1648.0,2310.4 1772.0,2311.0 C1870.0,2311.4 1968.0,2312.4 2066.0,2311.0 C2164.3,2309.6 2262.7,2304.2 2361.0,2302.7 C2449.2,2301.4 2537.3,2302.7 2625.5,2302.7" fill="none" stroke="#8f6330" stroke-width="4"/>
<path d="M130.0,2336.6 C183.0,2337.9 236.0,2339.9 289.0,2340.5 C356.7,2341.2 424.3,2341.5 492.0,2340.5 C592.3,2339.1 692.7,2334.7 793.0,2333.4 C882.3,2332.3 971.7,2332.8 1061.0,2333.4 C1174.0,2334.1 1287.0,2336.3 1400.0,2337.3 C1563.3,2338.7 1726.7,2340.5 1890.0,2340.5 C1981.5,2340.5 2073.1,2337.0 2164.6,2337.3 C2230.1,2337.5 2295.5,2342.0 2361.0,2341.8 C2448.0,2341.6 2535.0,2337.9 2622.0,2336.0" fill="none" stroke="#8f6330" stroke-width="4"/>
<path d="M122.5,2379.0 C178.0,2376.9 233.5,2373.4 289.0,2372.6 C457.0,2370.2 625.0,2370.0 793.0,2369.3 C882.3,2368.9 971.7,2368.5 1061.0,2369.3 C1174.0,2370.3 1287.0,2374.7 1400.0,2374.5 C1513.2,2374.3 1626.4,2366.8 1739.6,2368.0 C1881.3,2369.4 2022.9,2378.6 2164.6,2382.3 C2230.1,2384.0 2295.5,2384.9 2361.0,2384.3 C2445.9,2383.6 2530.8,2380.4 2615.7,2378.4" fill="none" stroke="#8f6330" stroke-width="4"/>
<path d="M127.0,2410.4 C181.0,2408.3 235.0,2404.3 289.0,2404.0 C659.3,2402.1 1029.7,2403.6 1400.0,2404.0 C1480.5,2404.1 1561.0,2404.1 1641.5,2405.3 C1772.3,2407.3 1903.0,2410.7 2033.8,2413.7 C2121.0,2415.7 2208.1,2420.8 2295.3,2420.2 C2403.6,2419.5 2512.0,2413.3 2620.3,2409.8" fill="none" stroke="#8f6330" stroke-width="4"/>
<path d="M130.0,2445.0 C183.0,2443.3 236.0,2440.6 289.0,2439.8 C457.0,2437.2 625.0,2435.4 793.0,2434.6 C995.3,2433.7 1197.7,2434.3 1400.0,2434.6 C1720.3,2435.0 2040.7,2433.9 2361.0,2436.6 C2448.0,2437.3 2535.0,2442.2 2622.0,2445.0" fill="none" stroke="#8f6330" stroke-width="4"/>
<rect x="113.80" y="97.60" width="289.20" height="108.70" fill="#0b0807"/>
<rect x="113.80" y="97.60" width="286.20" height="103.40" fill="#a5a6a8"/>
<circle cx="206.50" cy="149.50" r="27.80" fill="#42454e" stroke="#0b0807" stroke-width="3.00"/>
<path d="M203.50,132.50 L209.50,132.50 L209.50,143.00 C209.50,144.93 211.07,146.50 213.00,146.50 L223.50,146.50 L223.50,152.50 L213.00,152.50 C211.07,152.50 209.50,154.07 209.50,156.00 L209.50,166.50 L203.50,166.50 L203.50,156.00 C203.50,154.07 201.93,152.50 200.00,152.50 L189.50,152.50 L189.50,146.50 L200.00,146.50 C201.93,146.50 203.50,144.93 203.50,143.00 Z" fill="#42454e" stroke="#0b0807" stroke-width="2.90" stroke-linejoin="round"/>
<circle cx="347.00" cy="149.50" r="27.80" fill="#42454e" stroke="#0b0807" stroke-width="3.00"/>
<path d="M344.00,132.50 L350.00,132.50 L350.00,143.00 C350.00,144.93 351.57,146.50 353.50,146.50 L364.00,146.50 L364.00,152.50 L353.50,152.50 C351.57,152.50 350.00,154.07 350.00,156.00 L350.00,166.50 L344.00,166.50 L344.00,156.00 C344.00,154.07 342.43,152.50 340.50,152.50 L330.00,152.50 L330.00,146.50 L340.50,146.50 C342.43,146.50 344.00,144.93 344.00,143.00 Z" fill="#42454e" stroke="#0b0807" stroke-width="2.90" stroke-linejoin="round"/>
<polygon points="418.9,108.9 508,108.9 514,115.7 449.2,116 464,131.5 443.9,151.7 518.2,151.7 500.3,168.7 417.7,168.7 447.4,138.6" fill="#e2e7e2"/>
<path d="M559.90,132.40 L593.40,132.40 L593.40,135.80 L571.40,135.80 L571.40,146.80 L593.40,146.80 L593.40,166.90 L559.90,166.90 L559.90,163.50 L582.10,163.50 L582.10,149.80 L559.90,149.80 Z M607.70,122.30 L618.30,122.30 L618.30,126.00 L607.70,126.00 Z M607.70,132.40 L618.30,132.40 L618.30,166.90 L607.70,166.90 Z M632.60,132.40 L664.70,132.40 L664.70,180.10 L631.40,180.10 L631.40,176.60 L654.60,176.60 L654.60,166.90 L632.60,166.90 Z M643.30,135.80 L654.60,135.80 L654.60,163.50 L643.30,163.50 Z M679.50,132.55 L734.50,132.55 L734.50,166.70 L723.80,166.70 L723.80,135.50 L712.50,135.50 L712.50,166.70 L701.50,166.70 L701.50,135.50 L689.90,135.50 L689.90,166.70 L679.50,166.70 Z M746.40,132.55 L780.20,132.55 L780.20,166.70 L747.80,166.70 L747.80,146.80 L769.60,146.80 L769.60,135.50 L746.40,135.50 Z M757.40,150.30 L769.60,150.30 L769.60,163.50 L757.40,163.50 Z" fill="#e2e7e2" fill-rule="evenodd" stroke="#e2e7e2" stroke-width="3.6" stroke-linejoin="round"/>
<g transform="translate(557.80,200.16) scale(1.7309,1)"><text x="-0.40 8.92 18.25 27.58 36.12 45.44" y="0.00" font-size="13.98" fill="#e2e7e2" font-weight="bold" stroke="#e2e7e2" stroke-width="0.7">SYSTEM</text></g>
<g transform="translate(670.80,200.16) scale(1.7088,1)"><text x="-0.94 8.39 18.49 29.37 33.25 43.35 52.67 62.00 72.10 75.98 86.08" y="0.00" font-size="13.98" fill="#e2e7e2" font-weight="bold" stroke="#e2e7e2" stroke-width="0.7">ENGINEERING</text></g>
<circle cx="1291.80" cy="161.00" r="37.00" fill="#343740" stroke="#0b0807" stroke-width="4.00"/>
<circle cx="1291.80" cy="161.00" r="34.10" fill="none" stroke="#d8d0c8" stroke-width="1"/>
<path d="M1287.95,141.40 L1295.65,141.40 L1295.65,149.15 C1295.65,153.55 1299.25,157.15 1303.65,157.15 L1311.40,157.15 L1311.40,164.85 L1303.65,164.85 C1299.25,164.85 1295.65,168.45 1295.65,172.85 L1295.65,180.60 L1287.95,180.60 L1287.95,172.85 C1287.95,168.45 1284.35,164.85 1279.95,164.85 L1272.20,164.85 L1272.20,157.15 L1279.95,157.15 C1284.35,157.15 1287.95,153.55 1287.95,149.15 Z" fill="#343740" stroke="#0b0807" stroke-width="2.00" stroke-linejoin="round"/>
<circle cx="2343.00" cy="161.00" r="37.00" fill="#343740" stroke="#0b0807" stroke-width="4.00"/>
<circle cx="2343.00" cy="161.00" r="34.10" fill="none" stroke="#d8d0c8" stroke-width="1"/>
<path d="M2339.15,141.40 L2346.85,141.40 L2346.85,149.15 C2346.85,153.55 2350.45,157.15 2354.85,157.15 L2362.60,157.15 L2362.60,164.85 L2354.85,164.85 C2350.45,164.85 2346.85,168.45 2346.85,172.85 L2346.85,180.60 L2339.15,180.60 L2339.15,172.85 C2339.15,168.45 2335.55,164.85 2331.15,164.85 L2323.40,164.85 L2323.40,157.15 L2331.15,157.15 C2335.55,157.15 2339.15,153.55 2339.15,149.15 Z" fill="#343740" stroke="#0b0807" stroke-width="2.00" stroke-linejoin="round"/>
<text x="1728.53 1756.17 1783.81 1797.88 1821.02 1844.15 1867.29 1902.25 1932.14 1955.27 1991.94 2017.30 2031.37 2066.33 2096.21 2121.57 2146.93 2161.00 2177.35 2202.71 2214.54 2226.37 2249.50" y="196.14" font-size="40.63" fill="#e2e7e2" font-weight="bold">SS-4300RemoteController</text>
<rect x="2321.00" y="97.60" width="298.50" height="108.70" fill="#0b0807"/>
<rect x="2324.00" y="97.60" width="295.50" height="103.40" fill="#a5a6a8"/>
<circle cx="2384.00" cy="149.50" r="27.80" fill="#42454e" stroke="#0b0807" stroke-width="3.00"/>
<path d="M2381.00,132.50 L2387.00,132.50 L2387.00,143.00 C2387.00,144.93 2388.57,146.50 2390.50,146.50 L2401.00,146.50 L2401.00,152.50 L2390.50,152.50 C2388.57,152.50 2387.00,154.07 2387.00,156.00 L2387.00,166.50 L2381.00,166.50 L2381.00,156.00 C2381.00,154.07 2379.43,152.50 2377.50,152.50 L2367.00,152.50 L2367.00,146.50 L2377.50,146.50 C2379.43,146.50 2381.00,144.93 2381.00,143.00 Z" fill="#42454e" stroke="#0b0807" stroke-width="2.90" stroke-linejoin="round"/>
<circle cx="2526.00" cy="149.50" r="27.80" fill="#42454e" stroke="#0b0807" stroke-width="3.00"/>
<path d="M2523.00,132.50 L2529.00,132.50 L2529.00,143.00 C2529.00,144.93 2530.57,146.50 2532.50,146.50 L2543.00,146.50 L2543.00,152.50 L2532.50,152.50 C2530.57,152.50 2529.00,154.07 2529.00,156.00 L2529.00,166.50 L2523.00,166.50 L2523.00,156.00 C2523.00,154.07 2521.43,152.50 2519.50,152.50 L2509.00,152.50 L2509.00,146.50 L2519.50,146.50 C2521.43,146.50 2523.00,144.93 2523.00,143.00 Z" fill="#42454e" stroke="#0b0807" stroke-width="2.90" stroke-linejoin="round"/>
<rect x="113.80" y="204.80" width="17.00" height="1.20" fill="#ffffff"/>
<rect x="147.00" y="204.80" width="15.00" height="1.20" fill="#ffffff"/>
<rect x="128.80" y="209.80" width="33.50" height="1.20" fill="#ffffff"/>
<rect x="2569.90" y="205.30" width="6.90" height="1.20" fill="#ffffff"/>
<rect x="2582.30" y="205.30" width="36.10" height="1.20" fill="#ffffff"/>
<rect x="2569.90" y="209.90" width="8.90" height="1.20" fill="#ffffff"/>
<path d="M112.2,96 V516.3 A23,23 0 0 0 135.2,539.3 H2597.8 A23,23 0 0 0 2620.8,516.3 V96" fill="none" stroke="#29abe2" stroke-width="3.8"/>
<line x1="112.2" y1="492.8" x2="2572" y2="492.8" stroke="#29abe2" stroke-width="3.8"/>
<rect x="110.30" y="94.50" width="2512.30" height="3.30" fill="#29abe2"/>
<text x="2538.90 2563.61 2588.31" y="515.49" font-size="31.36" fill="#e2e7e2" font-weight="bold">BUS</text>
<text x="2504.01 2526.30 2548.58 2568.94 2591.22 2615.40" y="546.66" font-size="34.32" fill="#e2e7e2" font-weight="bold">SELECT</text>
<rect x="89.00" y="77.00" width="124.00" height="21.00" fill="#a5a6a8"/>
<rect x="89.00" y="77.00" width="124.00" height="1.20" fill="#0b0807"/>
<rect x="89.00" y="94.00" width="124.00" height="4.00" fill="#343741"/>
<rect x="209.30" y="77.00" width="3.70" height="21.00" fill="#343741"/>
<rect x="2519.40" y="77.00" width="168.60" height="21.00" fill="#a5a6a8"/>
<rect x="2519.40" y="77.00" width="168.60" height="1.20" fill="#0b0807"/>
<rect x="2519.40" y="94.00" width="168.60" height="4.00" fill="#343741"/>
<rect x="2519.40" y="77.00" width="3.60" height="21.00" fill="#343741"/>
<path d="M115.10,74.6 V6 Q115.10,0 121.00,0 H207.00 Q212.90,0 212.90,6 V74.6 Z" fill="#0b0807"/>
<rect x="129.00" y="74.00" width="69.80" height="3.40" fill="#0b0807"/>
<path d="M117.80,71 V7 Q117.80,2.7 122.50,2.7 H205.50 Q210.20,2.7 210.20,7 V71 Z" fill="#b4bfc7"/>
<rect x="117.80" y="7.00" width="2.50" height="64.00" fill="#5f6366"/>
<rect x="207.70" y="7.00" width="2.50" height="64.00" fill="#5f6366"/>
<rect x="119.30" y="7.10" width="1.80" height="63.90" fill="#0b0807"/>
<rect x="124.30" y="7.10" width="1.80" height="63.90" fill="#0b0807"/>
<rect x="130.00" y="7.10" width="1.80" height="63.90" fill="#0b0807"/>
<rect x="137.10" y="7.10" width="1.80" height="63.90" fill="#0b0807"/>
<rect x="145.40" y="7.10" width="1.80" height="63.90" fill="#0b0807"/>
<rect x="154.90" y="7.10" width="1.80" height="63.90" fill="#0b0807"/>
<rect x="171.30" y="7.10" width="1.80" height="63.90" fill="#0b0807"/>
<rect x="180.80" y="7.10" width="1.80" height="63.90" fill="#0b0807"/>
<rect x="189.10" y="7.10" width="1.80" height="63.90" fill="#0b0807"/>
<rect x="196.20" y="7.10" width="1.80" height="63.90" fill="#0b0807"/>
<rect x="202.20" y="7.10" width="1.80" height="63.90" fill="#0b0807"/>
<rect x="206.90" y="7.10" width="1.80" height="63.90" fill="#0b0807"/>
<rect x="162.90" y="15.00" width="1.80" height="56.00" fill="#0b0807"/>
<path d="M158.20,0 V13.5 Q158.20,15.75 160.50,15.75 H167.50 Q169.80,15.75 169.80,13.5 V0 Z" fill="#0b0807"/>
<rect x="160.60" y="0.00" width="6.50" height="12.20" fill="#ffffff"/>
<path d="M2518.90,74.6 V6 Q2518.90,0 2524.80,0 H2610.80 Q2616.70,0 2616.70,6 V74.6 Z" fill="#0b0807"/>
<rect x="2532.80" y="74.00" width="69.80" height="3.40" fill="#0b0807"/>
<path d="M2521.60,71 V7 Q2521.60,2.7 2526.30,2.7 H2609.30 Q2614.00,2.7 2614.00,7 V71 Z" fill="#b4bfc7"/>
<rect x="2521.60" y="7.00" width="2.50" height="64.00" fill="#5f6366"/>
<rect x="2611.50" y="7.00" width="2.50" height="64.00" fill="#5f6366"/>
<rect x="2523.10" y="7.10" width="1.80" height="63.90" fill="#0b0807"/>
<rect x="2528.10" y="7.10" width="1.80" height="63.90" fill="#0b0807"/>
<rect x="2533.80" y="7.10" width="1.80" height="63.90" fill="#0b0807"/>
<rect x="2540.90" y="7.10" width="1.80" height="63.90" fill="#0b0807"/>
<rect x="2549.20" y="7.10" width="1.80" height="63.90" fill="#0b0807"/>
<rect x="2558.70" y="7.10" width="1.80" height="63.90" fill="#0b0807"/>
<rect x="2575.10" y="7.10" width="1.80" height="63.90" fill="#0b0807"/>
<rect x="2584.60" y="7.10" width="1.80" height="63.90" fill="#0b0807"/>
<rect x="2592.90" y="7.10" width="1.80" height="63.90" fill="#0b0807"/>
<rect x="2600.00" y="7.10" width="1.80" height="63.90" fill="#0b0807"/>
<rect x="2606.00" y="7.10" width="1.80" height="63.90" fill="#0b0807"/>
<rect x="2610.70" y="7.10" width="1.80" height="63.90" fill="#0b0807"/>
<rect x="2566.70" y="15.00" width="1.80" height="56.00" fill="#0b0807"/>
<path d="M2562.00,0 V13.5 Q2562.00,15.75 2564.30,15.75 H2571.30 Q2573.60,15.75 2573.60,13.5 V0 Z" fill="#0b0807"/>
<rect x="2564.40" y="0.00" width="6.50" height="12.20" fill="#ffffff"/>
<path d="M89,72 V2455 H26 A26,26 0 0 1 0,2429 V94 A22,22 0 0 1 22,72 Z" fill="#6e7176"/>
<path d="M85.6,79 V2446 H25 A18,18 0 0 1 7,2428 V97 A18,18 0 0 1 25,79 Z" fill="#8b8d91"/>
<path d="M85.6,90 V2434 H35 A16,16 0 0 1 19,2418 V106 A16,16 0 0 1 35,90 Z" fill="#a5a6a9"/>
<path d="M2643.8,82 V2462 H2701 A32,32 0 0 0 2733,2430 V112 A30,30 0 0 0 2703,82 Z" fill="#6e7176"/>
<path d="M2647,88.2 V2458.8 H2700 A26,26 0 0 0 2726,2432.8 V112 A24,24 0 0 0 2702,88.2 Z" fill="#8b8d91"/>
<path d="M2647,99.6 V2443.3 H2694 A20,20 0 0 0 2714,2423.3 V119.6 A20,20 0 0 0 2694,99.6 Z" fill="#a5a6a9"/>
</svg>
</body></html>
